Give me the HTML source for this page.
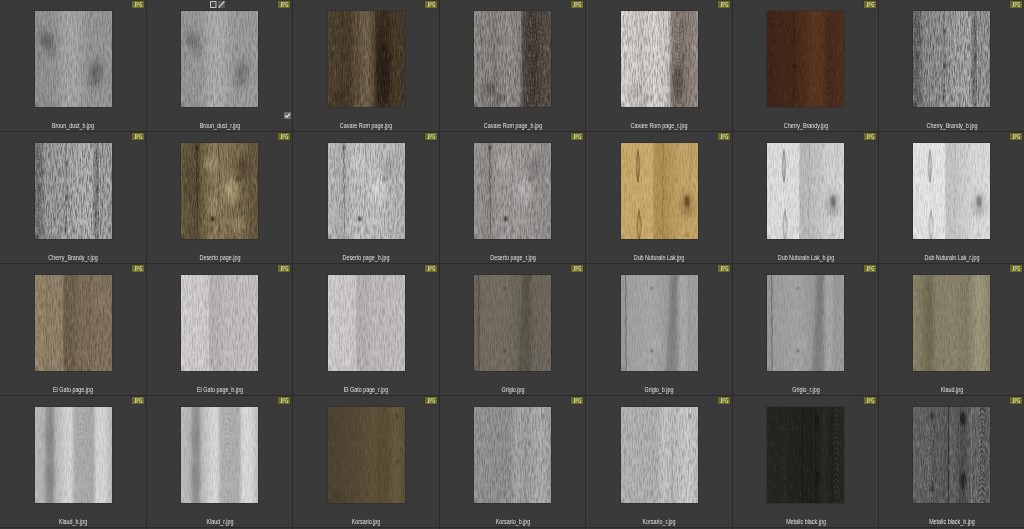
<!DOCTYPE html>
<html><head><meta charset="utf-8"><style>
*{margin:0;padding:0;box-sizing:border-box}
html,body{width:1024px;height:529px;overflow:hidden;background:#3a3a3a;font-family:"Liberation Sans",sans-serif}
.vl{position:absolute;top:0;width:1px;height:529px;background:#2a2a2a}
.hl{position:absolute;left:0;height:1px;width:1024px;background:#2a2a2a}
.th{position:absolute;width:77px;height:96px;box-shadow:0 0 0 1px rgba(20,20,20,.2)}
.th svg{display:block}
.lb{position:absolute;width:200px;height:10px;font-size:6.9px;line-height:10px;color:#e2e2e2;text-align:center;white-space:nowrap;transform:scaleX(.78);transform-origin:center}
.bd{position:absolute;width:12px;height:7px;box-shadow:0 0 0 1px rgba(40,40,60,.3)}
.bd span{position:absolute;left:0;top:0;width:12px;height:7px;font-size:6px;line-height:7px;font-weight:bold;color:#e2e2c8;text-align:center;transform:scaleX(.62);transform-origin:center;letter-spacing:-0.2px}
</style></head><body>
<div class="vl" style="left:146px"></div><div class="vl" style="left:292px"></div><div class="vl" style="left:439px"></div><div class="vl" style="left:585px"></div><div class="vl" style="left:732px"></div><div class="vl" style="left:878px"></div><div class="hl" style="top:131px"></div><div class="hl" style="top:263px"></div><div class="hl" style="top:395px"></div><div class="hl" style="top:527px"></div><svg width="0" height="0" style="position:absolute"><defs>
<filter id="grain" x="0" y="0" width="100%" height="100%"><feTurbulence type="fractalNoise" baseFrequency="0.8 0.12" numOctaves="3" seed="3"/><feColorMatrix type="matrix" values="0 0 0 0 0  0 0 0 0 0  0 0 0 0 0  0 0 0 -1.6 1.0"/></filter>
<filter id="grainL" x="0" y="0" width="100%" height="100%"><feTurbulence type="fractalNoise" baseFrequency="0.8 0.12" numOctaves="3" seed="7"/><feColorMatrix type="matrix" values="0 0 0 0 1  0 0 0 0 1  0 0 0 0 1  0 0 0 1.6 -0.9"/></filter>
<filter id="blur2" x="-60%" y="-60%" width="220%" height="220%"><feGaussianBlur stdDeviation="3"/></filter>
<filter id="soft" x="-10%" y="-10%" width="120%" height="120%"><feGaussianBlur stdDeviation="0.45"/></filter>
<filter id="blur1"><feGaussianBlur stdDeviation="1.2"/></filter>
</defs></svg><div class="th" style="left:35px;top:11px"><svg width="77" height="96" viewBox="0 0 77 96"><defs><linearGradient id="lg0" x1="0" x2="1" y1="0" y2="0"><stop offset="0" stop-color="#949494"/><stop offset="0.25" stop-color="#969696"/><stop offset="0.38" stop-color="#a8a8a8"/><stop offset="0.5" stop-color="#acacac"/><stop offset="0.6" stop-color="#a2a2a2"/><stop offset="0.72" stop-color="#989898"/><stop offset="1" stop-color="#9a9a9a"/></linearGradient></defs><rect width="77" height="96" fill="url(#lg0)"/><ellipse cx="12" cy="30" rx="6" ry="10" fill="#505050" opacity="0.6" filter="url(#blur2)"/><ellipse cx="17" cy="40" rx="4" ry="6" fill="#555" opacity="0.35" filter="url(#blur2)"/><ellipse cx="8" cy="24" rx="3" ry="4" fill="#555" opacity="0.3" filter="url(#blur2)"/><ellipse cx="61" cy="62" rx="6" ry="12" fill="#505050" opacity="0.6" filter="url(#blur2)"/><ellipse cx="57" cy="73" rx="4" ry="5" fill="#555" opacity="0.35" filter="url(#blur2)"/><ellipse cx="64" cy="55" rx="3" ry="4" fill="#555" opacity="0.3" filter="url(#blur2)"/><rect width="77" height="96" filter="url(#grain)" opacity="0.3"/><rect width="77" height="96" filter="url(#grainL)" opacity="0.25"/></svg></div><div class="lb" style="left:-27.00px;top:121px">Broun_dust_b.jpg</div><svg class="bd" style="left:132px;top:1px" width="12" height="7" viewBox="0 0 12 7"><rect width="12" height="7" fill="#6c6c1c"/><g fill="#d8d8c0" opacity=".8"><rect x="3" y="1" width="1" height="5"/><rect x="2" y="5" width="1" height="1" opacity=".6"/><rect x="4.5" y="1" width="1" height="5"/><rect x="5.5" y="1" width="1" height="1"/><rect x="5.5" y="3" width="1" height="1"/><rect x="6.3" y="1.7" width=".8" height="1.6"/><rect x="8" y="1" width="2" height="1"/><rect x="7.3" y="1.7" width="1" height="3.6"/><rect x="8" y="5" width="2" height="1"/><rect x="9.3" y="3" width=".9" height="2.3"/></g></svg><div class="th" style="left:181px;top:11px"><svg width="77" height="96" viewBox="0 0 77 96"><defs><linearGradient id="lg1" x1="0" x2="1" y1="0" y2="0"><stop offset="0" stop-color="#9a9a9a"/><stop offset="0.25" stop-color="#9c9c9c"/><stop offset="0.38" stop-color="#aeaeae"/><stop offset="0.5" stop-color="#b2b2b2"/><stop offset="0.6" stop-color="#a8a8a8"/><stop offset="0.72" stop-color="#9e9e9e"/><stop offset="1" stop-color="#a0a0a0"/></linearGradient></defs><rect width="77" height="96" fill="url(#lg1)"/><ellipse cx="12" cy="30" rx="6" ry="10" fill="#5a5a5a" opacity="0.5" filter="url(#blur2)"/><ellipse cx="17" cy="40" rx="4" ry="6" fill="#5e5e5e" opacity="0.3" filter="url(#blur2)"/><ellipse cx="8" cy="24" rx="3" ry="4" fill="#5e5e5e" opacity="0.25" filter="url(#blur2)"/><ellipse cx="61" cy="62" rx="6" ry="12" fill="#5a5a5a" opacity="0.5" filter="url(#blur2)"/><ellipse cx="57" cy="73" rx="4" ry="5" fill="#5e5e5e" opacity="0.3" filter="url(#blur2)"/><ellipse cx="64" cy="55" rx="3" ry="4" fill="#5e5e5e" opacity="0.25" filter="url(#blur2)"/><rect width="77" height="96" filter="url(#grain)" opacity="0.3"/><rect width="77" height="96" filter="url(#grainL)" opacity="0.25"/></svg></div><div class="lb" style="left:119.50px;top:121px">Broun_dust_r.jpg</div><svg class="bd" style="left:278px;top:1px" width="12" height="7" viewBox="0 0 12 7"><rect width="12" height="7" fill="#6c6c1c"/><g fill="#d8d8c0" opacity=".8"><rect x="3" y="1" width="1" height="5"/><rect x="2" y="5" width="1" height="1" opacity=".6"/><rect x="4.5" y="1" width="1" height="5"/><rect x="5.5" y="1" width="1" height="1"/><rect x="5.5" y="3" width="1" height="1"/><rect x="6.3" y="1.7" width=".8" height="1.6"/><rect x="8" y="1" width="2" height="1"/><rect x="7.3" y="1.7" width="1" height="3.6"/><rect x="8" y="5" width="2" height="1"/><rect x="9.3" y="3" width=".9" height="2.3"/></g></svg><div class="th" style="left:328px;top:11px"><svg width="77" height="96" viewBox="0 0 77 96"><defs><linearGradient id="lg2" x1="0" x2="1" y1="0" y2="0"><stop offset="0" stop-color="#54442f"/><stop offset="0.28" stop-color="#4e3f2c"/><stop offset="0.38" stop-color="#685844"/><stop offset="0.5" stop-color="#76664e"/><stop offset="0.6" stop-color="#5c4c38"/><stop offset="0.64" stop-color="#3e3022"/><stop offset="0.78" stop-color="#3a2d20"/><stop offset="0.86" stop-color="#4c3c2a"/><stop offset="1" stop-color="#4a3b2a"/></linearGradient></defs><rect width="77" height="96" fill="url(#lg2)"/><ellipse cx="55" cy="62" rx="4" ry="30" fill="#140e08" opacity="0.55" filter="url(#blur2)"/><ellipse cx="52" cy="30" rx="3" ry="14" fill="#1e160e" opacity="0.35" filter="url(#blur2)"/><path d="M29.5 0.0 L30.1 6.0 L29.7 12.0 L30.2 18.0 L30.3 24.0 L29.1 30.0 L29.0 36.0 L30.7 42.0 L29.5 48.0 L29.5 54.0 L31.0 60.0 L29.9 66.0 L30.7 72.0 L30.0 78.0 L30.3 84.0 L29.3 90.0 L30.3 96.0" fill="none" stroke="#2a2016" stroke-width="1.0" opacity="0.4"/><path d="M14.2 0.0 L14.5 6.0 L14.6 12.0 L14.9 18.0 L14.5 24.0 L14.8 30.0 L13.1 36.0 L13.9 42.0 L14.9 48.0 L14.3 54.0 L14.8 60.0 L13.2 66.0 L13.9 72.0 L13.5 78.0 L14.1 84.0 L14.1 90.0 L13.0 96.0" fill="none" stroke="#2a2016" stroke-width="1" opacity="0.3"/><ellipse cx="12" cy="85" rx="6" ry="5" fill="#2a2016" opacity="0.4" filter="url(#blur2)"/><path d="M39.3 0.0 L41.1 6.0 L39.1 12.0 L40.5 18.0 L39.0 24.0 L39.4 30.0 L41.2 36.0 L39.3 42.0 L40.3 48.0 L39.9 54.0 L39.9 60.0 L40.0 66.0 L39.3 72.0 L40.8 78.0 L39.0 84.0 L39.4 90.0 L38.8 96.0" fill="none" stroke="#a89a84" stroke-width="0.7" opacity="0.35"/><rect width="77" height="96" filter="url(#grain)" opacity="0.45"/><rect width="77" height="96" filter="url(#grainL)" opacity="0.25"/></svg></div><div class="lb" style="left:266.00px;top:121px">Cavare Rom page.jpg</div><svg class="bd" style="left:425px;top:1px" width="12" height="7" viewBox="0 0 12 7"><rect width="12" height="7" fill="#6c6c1c"/><g fill="#d8d8c0" opacity=".8"><rect x="3" y="1" width="1" height="5"/><rect x="2" y="5" width="1" height="1" opacity=".6"/><rect x="4.5" y="1" width="1" height="5"/><rect x="5.5" y="1" width="1" height="1"/><rect x="5.5" y="3" width="1" height="1"/><rect x="6.3" y="1.7" width=".8" height="1.6"/><rect x="8" y="1" width="2" height="1"/><rect x="7.3" y="1.7" width="1" height="3.6"/><rect x="8" y="5" width="2" height="1"/><rect x="9.3" y="3" width=".9" height="2.3"/></g></svg><div class="th" style="left:474px;top:11px"><svg width="77" height="96" viewBox="0 0 77 96"><defs><linearGradient id="lg3" x1="0" x2="1" y1="0" y2="0"><stop offset="0" stop-color="#96928e"/><stop offset="0.28" stop-color="#8c8884"/><stop offset="0.45" stop-color="#9a9692"/><stop offset="0.6" stop-color="#8e8884"/><stop offset="0.64" stop-color="#564e48"/><stop offset="0.8" stop-color="#4a423c"/><stop offset="1" stop-color="#5e5650"/></linearGradient></defs><rect width="77" height="96" fill="url(#lg3)"/><path d="M52.2 0.0 Q57.4 4.2 62.6 0.0 M53.4 3.5 Q58.5 7.3 63.5 3.5 M53.8 6.7 Q57.8 12.2 61.8 6.7 M52.8 11.3 Q58.4 16.1 64.1 11.3 M54.0 15.3 Q58.0 20.7 61.9 15.3 M53.9 19.8 Q58.5 24.5 63.0 19.8 M51.6 23.7 Q57.8 29.2 63.9 23.7 M52.0 28.3 Q58.2 33.9 64.4 28.3 M52.0 33.0 Q57.5 38.4 63.0 33.0 M52.3 37.5 Q58.3 41.6 64.4 37.5 M51.8 40.9 Q58.2 45.1 64.5 40.9 M51.4 44.4 Q57.8 49.4 64.3 44.4 M54.6 48.6 Q58.3 52.7 62.0 48.6 M53.0 52.0 Q58.4 56.5 63.9 52.0 M54.1 55.8 Q58.5 60.1 62.9 55.8 M53.1 59.4 Q58.1 65.0 63.1 59.4 M50.9 64.1 Q57.6 68.5 64.2 64.1 M52.4 67.8 Q58.5 73.5 64.6 67.8 M50.6 72.5 Q57.4 77.5 64.3 72.5 M53.9 76.7 Q58.5 82.3 63.0 76.7 M51.7 81.3 Q57.8 86.6 63.8 81.3 M53.6 85.7 Q58.1 91.4 62.6 85.7 M51.9 90.4 Q58.0 95.3 64.1 90.4 M52.6 94.5 Q57.8 99.9 63.0 94.5 " fill="none" stroke="#2a2420" stroke-width="0.9" opacity="0.5" filter="url(#soft)"/><path d="M63.4 4.0 Q67.6 9.7 71.8 4.0 M64.4 8.7 Q68.4 15.5 72.5 8.7 M63.7 14.4 Q68.2 19.4 72.7 14.4 M64.2 18.6 Q68.3 25.3 72.4 18.6 M64.1 24.2 Q68.4 30.1 72.8 24.2 M65.5 29.1 Q68.4 34.1 71.3 29.1 M64.2 33.3 Q68.0 38.2 71.8 33.3 M65.6 37.4 Q68.1 44.3 70.5 37.4 M65.6 43.2 Q68.2 49.9 70.7 43.2 M63.9 48.8 Q67.6 53.7 71.2 48.8 M63.3 52.9 Q67.6 59.3 71.9 52.9 M65.2 58.3 Q68.3 65.4 71.3 58.3 M65.7 64.2 Q68.5 70.4 71.4 64.2 M64.4 69.4 Q68.1 75.1 71.7 69.4 M65.9 74.1 Q68.5 79.7 71.1 74.1 M63.7 78.8 Q68.3 83.7 72.9 78.8 M63.3 82.9 Q67.8 89.5 72.4 82.9 M64.8 88.4 Q68.4 93.3 72.0 88.4 M64.9 92.5 Q67.5 98.7 70.0 92.5 " fill="none" stroke="#b0a8a0" stroke-width="0.6" opacity="0.3" filter="url(#soft)"/><ellipse cx="15" cy="78" rx="6" ry="6" fill="#3a3430" opacity="0.5" filter="url(#blur2)"/><ellipse cx="25" cy="88" rx="5" ry="5" fill="#3a3430" opacity="0.4" filter="url(#blur2)"/><path d="M20.6 0.0 L20.6 6.0 L20.0 12.0 L19.5 18.0 L19.0 24.0 L20.3 30.0 L19.9 36.0 L20.5 42.0 L19.7 48.0 L20.5 54.0 L19.5 60.0 L20.6 66.0 L20.5 72.0 L19.8 78.0 L20.1 84.0 L20.4 90.0 L19.4 96.0" fill="none" stroke="#4a4440" stroke-width="0.8" opacity="0.35"/><path d="M7.9 0.0 L7.7 6.0 L7.3 12.0 L8.7 18.0 L7.0 24.0 L8.0 30.0 L8.8 36.0 L7.2 42.0 L8.1 48.0 L8.2 54.0 L7.1 60.0 L7.8 66.0 L8.4 72.0 L7.9 78.0 L8.5 84.0 L7.3 90.0 L7.5 96.0" fill="none" stroke="#4a4440" stroke-width="0.8" opacity="0.3"/><rect width="77" height="96" filter="url(#grain)" opacity="0.5"/><rect width="77" height="96" filter="url(#grainL)" opacity="0.4"/></svg></div><div class="lb" style="left:412.50px;top:121px">Cavare Rom page_b.jpg</div><svg class="bd" style="left:571px;top:1px" width="12" height="7" viewBox="0 0 12 7"><rect width="12" height="7" fill="#6c6c1c"/><g fill="#d8d8c0" opacity=".8"><rect x="3" y="1" width="1" height="5"/><rect x="2" y="5" width="1" height="1" opacity=".6"/><rect x="4.5" y="1" width="1" height="5"/><rect x="5.5" y="1" width="1" height="1"/><rect x="5.5" y="3" width="1" height="1"/><rect x="6.3" y="1.7" width=".8" height="1.6"/><rect x="8" y="1" width="2" height="1"/><rect x="7.3" y="1.7" width="1" height="3.6"/><rect x="8" y="5" width="2" height="1"/><rect x="9.3" y="3" width=".9" height="2.3"/></g></svg><div class="th" style="left:621px;top:11px"><svg width="77" height="96" viewBox="0 0 77 96"><defs><linearGradient id="lg4" x1="0" x2="1" y1="0" y2="0"><stop offset="0" stop-color="#dedad6"/><stop offset="0.28" stop-color="#d4d0cc"/><stop offset="0.45" stop-color="#e0dcd8"/><stop offset="0.62" stop-color="#d0cac4"/><stop offset="0.66" stop-color="#948a82"/><stop offset="0.8" stop-color="#84786e"/><stop offset="1" stop-color="#a09690"/></linearGradient></defs><rect width="77" height="96" fill="url(#lg4)"/><path d="M53.5 10.0 Q58.0 15.3 62.6 10.0 M54.1 14.4 Q58.2 20.0 62.4 14.4 M52.9 19.0 Q58.5 24.6 64.1 19.0 M54.1 23.7 Q57.5 28.2 60.9 23.7 M53.0 27.4 Q57.5 31.7 62.1 27.4 M53.1 30.9 Q57.5 36.5 61.8 30.9 M54.9 35.6 Q58.5 39.6 62.1 35.6 M52.8 38.9 Q57.8 44.1 62.9 38.9 M53.0 43.2 Q58.1 47.6 63.2 43.2 M53.7 46.9 Q58.0 50.7 62.3 46.9 M54.2 50.1 Q58.5 54.3 62.7 50.1 M52.9 53.6 Q57.8 57.8 62.6 53.6 M52.6 57.1 Q58.3 62.9 64.0 57.1 M53.0 61.9 Q58.0 66.1 62.9 61.9 M52.5 65.4 Q57.8 70.5 63.2 65.4 M54.7 69.6 Q58.1 74.3 61.6 69.6 M52.7 73.6 Q57.7 78.8 62.7 73.6 M53.1 78.0 Q57.9 82.0 62.6 78.0 M52.8 81.3 Q57.6 86.6 62.5 81.3 M53.3 85.7 Q57.6 91.4 61.9 85.7 M53.5 90.4 Q57.9 95.8 62.3 90.4 M54.4 94.9 Q58.3 98.8 62.2 94.9 " fill="none" stroke="#5a4e46" stroke-width="0.9" opacity="0.45" filter="url(#soft)"/><ellipse cx="56" cy="72" rx="4" ry="20" fill="#3e3028" opacity="0.6" filter="url(#blur2)"/><ellipse cx="14" cy="80" rx="5" ry="6" fill="#8a8078" opacity="0.45" filter="url(#blur2)"/><ellipse cx="24" cy="88" rx="5" ry="4" fill="#8a8078" opacity="0.4" filter="url(#blur2)"/><path d="M20.6 0.0 L20.6 6.0 L20.0 12.0 L19.5 18.0 L19.0 24.0 L20.3 30.0 L19.9 36.0 L20.5 42.0 L19.7 48.0 L20.5 54.0 L19.5 60.0 L20.6 66.0 L20.5 72.0 L19.8 78.0 L20.1 84.0 L20.4 90.0 L19.4 96.0" fill="none" stroke="#9a928a" stroke-width="0.8" opacity="0.35"/><rect width="77" height="96" filter="url(#grain)" opacity="0.45"/><rect width="77" height="96" filter="url(#grainL)" opacity="0.35"/></svg></div><div class="lb" style="left:559.00px;top:121px">Cavare Rom page_r.jpg</div><svg class="bd" style="left:718px;top:1px" width="12" height="7" viewBox="0 0 12 7"><rect width="12" height="7" fill="#6c6c1c"/><g fill="#d8d8c0" opacity=".8"><rect x="3" y="1" width="1" height="5"/><rect x="2" y="5" width="1" height="1" opacity=".6"/><rect x="4.5" y="1" width="1" height="5"/><rect x="5.5" y="1" width="1" height="1"/><rect x="5.5" y="3" width="1" height="1"/><rect x="6.3" y="1.7" width=".8" height="1.6"/><rect x="8" y="1" width="2" height="1"/><rect x="7.3" y="1.7" width="1" height="3.6"/><rect x="8" y="5" width="2" height="1"/><rect x="9.3" y="3" width=".9" height="2.3"/></g></svg><div class="th" style="left:767px;top:11px"><svg width="77" height="96" viewBox="0 0 77 96"><defs><linearGradient id="lg5" x1="0" x2="1" y1="0" y2="0"><stop offset="0" stop-color="#42261a"/><stop offset="0.35" stop-color="#48291a"/><stop offset="0.5" stop-color="#52301e"/><stop offset="0.6" stop-color="#5e3822"/><stop offset="0.72" stop-color="#5a3520"/><stop offset="0.8" stop-color="#4a2c1c"/><stop offset="1" stop-color="#52301e"/></linearGradient></defs><rect width="77" height="96" fill="url(#lg5)"/><path d="M-2.2 0.0 Q3.5 6.5 9.2 0.0 M0.2 5.5 Q4.5 11.2 8.9 5.5 M-1.9 10.3 Q3.6 17.5 9.1 10.3 M-0.5 16.3 Q3.6 21.9 7.8 16.3 M-1.3 20.9 Q3.4 26.7 8.2 20.9 M0.5 25.7 Q3.5 30.9 6.5 25.7 M0.1 30.1 Q3.7 36.7 7.4 30.1 M0.3 35.6 Q4.4 42.6 8.6 35.6 M-0.9 41.4 Q4.5 47.6 10.0 41.4 M-0.4 46.6 Q4.5 52.7 9.3 46.6 M0.6 51.7 Q4.0 57.7 7.4 51.7 M0.0 56.7 Q3.5 62.0 7.0 56.7 M-0.5 61.1 Q4.4 67.5 9.3 61.1 M-0.7 66.4 Q3.4 71.2 7.6 66.4 M-0.8 70.4 Q4.0 76.3 8.8 70.4 M0.1 75.3 Q3.5 80.6 7.0 75.3 M0.8 79.7 Q4.1 85.2 7.5 79.7 M-0.6 84.3 Q3.9 90.4 8.4 84.3 M-0.7 89.4 Q4.3 94.5 9.4 89.4 M-1.2 93.7 Q4.4 100.5 10.1 93.7 " fill="none" stroke="#2e180c" stroke-width="0.9" opacity="0.35" filter="url(#soft)"/><path d="M26.8 0.0 L26.7 6.0 L27.2 12.0 L26.6 18.0 L27.0 24.0 L26.9 30.0 L26.6 36.0 L27.0 42.0 L26.5 48.0 L26.9 54.0 L26.6 60.0 L26.6 66.0 L26.9 72.0 L27.3 78.0 L26.6 84.0 L26.7 90.0 L27.1 96.0" fill="none" stroke="#2e180c" stroke-width="0.9" opacity="0.5"/><ellipse cx="27" cy="20" rx="1.2" ry="1.6" fill="#1e0e06" opacity="0.8" filter="url(#blur1)"/><ellipse cx="28" cy="55" rx="1.5" ry="2.5" fill="#1e0e06" opacity="0.7" filter="url(#blur1)"/><ellipse cx="27" cy="80" rx="1" ry="1.5" fill="#1e0e06" opacity="0.8" filter="url(#blur1)"/><path d="M57.6 5.0 Q60.9 11.9 64.2 5.0 M56.5 10.8 Q60.9 18.6 65.4 10.8 M57.7 17.3 Q61.3 23.5 64.9 17.3 M56.7 22.4 Q61.1 30.7 65.5 22.4 M57.9 29.3 Q60.7 35.3 63.6 29.3 M58.6 34.3 Q61.4 42.3 64.2 34.3 M57.8 41.0 Q61.6 46.8 65.4 41.0 M58.2 45.9 Q61.1 52.5 64.0 45.9 M58.4 51.4 Q61.5 57.8 64.5 51.4 M57.4 56.7 Q61.2 65.2 65.1 56.7 M57.1 63.8 Q60.5 70.5 64.0 63.8 M57.0 69.4 Q61.3 76.1 65.5 69.4 M57.2 75.0 Q61.2 81.1 65.1 75.0 M58.2 80.1 Q61.5 88.4 64.8 80.1 M56.8 87.1 Q61.1 93.9 65.4 87.1 M56.7 92.8 Q61.0 99.7 65.3 92.8 " fill="none" stroke="#2e180c" stroke-width="0.9" opacity="0.35" filter="url(#soft)"/><rect width="77" height="96" filter="url(#grain)" opacity="0.25"/><rect width="77" height="96" filter="url(#grainL)" opacity="0.1"/></svg></div><div class="lb" style="left:705.50px;top:121px">Cherry_Brandy.jpg</div><svg class="bd" style="left:864px;top:1px" width="12" height="7" viewBox="0 0 12 7"><rect width="12" height="7" fill="#6c6c1c"/><g fill="#d8d8c0" opacity=".8"><rect x="3" y="1" width="1" height="5"/><rect x="2" y="5" width="1" height="1" opacity=".6"/><rect x="4.5" y="1" width="1" height="5"/><rect x="5.5" y="1" width="1" height="1"/><rect x="5.5" y="3" width="1" height="1"/><rect x="6.3" y="1.7" width=".8" height="1.6"/><rect x="8" y="1" width="2" height="1"/><rect x="7.3" y="1.7" width="1" height="3.6"/><rect x="8" y="5" width="2" height="1"/><rect x="9.3" y="3" width=".9" height="2.3"/></g></svg><div class="th" style="left:913px;top:11px"><svg width="77" height="96" viewBox="0 0 77 96"><defs><linearGradient id="lg6" x1="0" x2="1" y1="0" y2="0"><stop offset="0" stop-color="#7e7e7e"/><stop offset="0.12" stop-color="#909090"/><stop offset="0.4" stop-color="#9a9a9a"/><stop offset="0.55" stop-color="#a8a8a8"/><stop offset="0.72" stop-color="#b0b0b0"/><stop offset="0.8" stop-color="#8e8e8e"/><stop offset="0.9" stop-color="#a0a0a0"/><stop offset="1" stop-color="#9a9a9a"/></linearGradient></defs><rect width="77" height="96" fill="url(#lg6)"/><rect x="0" y="0" width="9" height="96" fill="#3a3a3a" opacity="0.25" filter="url(#blur1)"/><path d="M-1.7 0.0 Q3.5 4.6 8.6 0.0 M0.6 3.8 Q4.5 7.9 8.4 3.8 M-1.4 7.2 Q3.6 12.2 8.6 7.2 M-0.1 11.4 Q3.6 15.3 7.3 11.4 M-0.8 14.7 Q3.4 18.7 7.7 14.7 M0.8 18.0 Q3.5 21.7 6.2 18.0 M0.5 21.0 Q3.7 25.7 7.0 21.0 M0.7 24.9 Q4.4 29.8 8.2 24.9 M-0.4 29.0 Q4.5 33.3 9.5 29.0 M0.1 32.6 Q4.5 36.9 8.8 32.6 M1.0 36.2 Q4.0 40.4 7.1 36.2 M0.4 39.7 Q3.5 43.4 6.7 39.7 M-0.1 42.8 Q4.4 47.2 8.8 42.8 M-0.3 46.5 Q3.4 49.8 7.2 46.5 M-0.3 49.3 Q4.0 53.4 8.4 49.3 M0.4 52.7 Q3.5 56.4 6.7 52.7 M1.1 55.8 Q4.1 59.7 7.1 55.8 M-0.2 59.0 Q3.9 63.3 8.0 59.0 M-0.2 62.6 Q4.3 66.2 8.9 62.6 M-0.7 65.6 Q4.4 70.3 9.5 65.6 M0.7 69.5 Q4.5 74.3 8.4 69.5 M0.9 73.5 Q4.2 78.3 7.5 73.5 M-0.1 77.5 Q4.5 81.7 9.0 77.5 M-0.9 81.0 Q3.5 85.5 7.9 81.0 M1.2 84.7 Q4.3 89.6 7.3 84.7 M-0.1 88.8 Q3.5 92.2 7.1 88.8 M-0.4 91.6 Q3.6 96.3 7.6 91.6 M-0.2 95.5 Q4.0 100.0 8.2 95.5 " fill="none" stroke="#3a3a3a" stroke-width="0.7" opacity="0.45" filter="url(#soft)"/><path d="M30.9 0.0 L30.7 6.0 L31.1 12.0 L30.7 18.0 L31.0 24.0 L30.9 30.0 L30.6 36.0 L31.0 42.0 L30.6 48.0 L30.9 54.0 L30.7 60.0 L30.7 66.0 L30.9 72.0 L31.3 78.0 L30.7 84.0 L30.8 90.0 L31.1 96.0" fill="none" stroke="#555" stroke-width="0.8" opacity="0.55"/><ellipse cx="31" cy="20" rx="1.2" ry="1.8" fill="#222" opacity="0.85" filter="url(#blur1)"/><ellipse cx="32" cy="55" rx="1.6" ry="3" fill="#333" opacity="0.7" filter="url(#blur1)"/><ellipse cx="31" cy="80" rx="1" ry="1.6" fill="#222" opacity="0.85" filter="url(#blur1)"/><rect x="59" y="0" width="6" height="96" fill="#3a3a3a" opacity="0.2" filter="url(#blur1)"/><path d="M60.6 5.0 Q62.6 9.9 64.5 5.0 M60.0 9.0 Q62.5 14.6 65.0 9.0 M60.5 13.7 Q62.4 17.7 64.3 13.7 M59.6 17.0 Q62.0 22.0 64.3 17.0 M59.3 21.1 Q61.5 26.8 63.7 21.1 M59.6 25.8 Q61.5 30.3 63.5 25.8 M59.7 29.6 Q61.9 33.6 64.1 29.6 M60.7 32.9 Q62.6 38.2 64.5 32.9 M58.9 37.3 Q61.5 41.7 64.1 37.3 M59.7 40.9 Q62.4 45.6 65.1 40.9 M60.2 44.8 Q62.1 49.2 63.9 44.8 M60.4 48.4 Q62.5 53.1 64.7 48.4 M59.2 52.3 Q61.8 56.9 64.4 52.3 M60.6 56.1 Q62.4 61.7 64.2 56.1 M59.7 60.7 Q61.8 66.0 64.0 60.7 M59.0 65.1 Q61.6 69.4 64.2 65.1 M59.2 68.7 Q61.9 74.2 64.6 68.7 M59.4 73.3 Q62.6 78.9 65.8 73.3 M58.4 78.0 Q61.6 83.3 64.8 78.0 M60.0 82.4 Q62.4 87.9 64.8 82.4 M58.8 87.0 Q61.5 91.9 64.2 87.0 M59.6 91.1 Q62.1 96.0 64.7 91.1 M60.0 95.2 Q62.0 99.2 64.1 95.2 " fill="none" stroke="#3a3a3a" stroke-width="0.7" opacity="0.5" filter="url(#soft)"/><rect x="64" y="0" width="1" height="96" fill="#e0e0e0" opacity="0.45"/><rect width="77" height="96" filter="url(#grain)" opacity="0.6"/><rect width="77" height="96" filter="url(#grainL)" opacity="0.5"/></svg></div><div class="lb" style="left:851.50px;top:121px">Cherry_Brandy_b.jpg</div><svg class="bd" style="left:1010px;top:1px" width="12" height="7" viewBox="0 0 12 7"><rect width="12" height="7" fill="#6c6c1c"/><g fill="#d8d8c0" opacity=".8"><rect x="3" y="1" width="1" height="5"/><rect x="2" y="5" width="1" height="1" opacity=".6"/><rect x="4.5" y="1" width="1" height="5"/><rect x="5.5" y="1" width="1" height="1"/><rect x="5.5" y="3" width="1" height="1"/><rect x="6.3" y="1.7" width=".8" height="1.6"/><rect x="8" y="1" width="2" height="1"/><rect x="7.3" y="1.7" width="1" height="3.6"/><rect x="8" y="5" width="2" height="1"/><rect x="9.3" y="3" width=".9" height="2.3"/></g></svg><div class="th" style="left:35px;top:143px"><svg width="77" height="96" viewBox="0 0 77 96"><defs><linearGradient id="lg7" x1="0" x2="1" y1="0" y2="0"><stop offset="0" stop-color="#8c8c8c"/><stop offset="0.12" stop-color="#a0a0a0"/><stop offset="0.4" stop-color="#a8a8a8"/><stop offset="0.55" stop-color="#b4b4b4"/><stop offset="0.72" stop-color="#bababa"/><stop offset="0.8" stop-color="#989898"/><stop offset="0.9" stop-color="#acacac"/><stop offset="1" stop-color="#a8a8a8"/></linearGradient></defs><rect width="77" height="96" fill="url(#lg7)"/><rect x="0" y="0" width="9" height="96" fill="#4a4a4a" opacity="0.25" filter="url(#blur1)"/><path d="M-1.7 0.0 Q3.5 4.6 8.6 0.0 M0.6 3.8 Q4.5 7.9 8.4 3.8 M-1.4 7.2 Q3.6 12.2 8.6 7.2 M-0.1 11.4 Q3.6 15.3 7.3 11.4 M-0.8 14.7 Q3.4 18.7 7.7 14.7 M0.8 18.0 Q3.5 21.7 6.2 18.0 M0.5 21.0 Q3.7 25.7 7.0 21.0 M0.7 24.9 Q4.4 29.8 8.2 24.9 M-0.4 29.0 Q4.5 33.3 9.5 29.0 M0.1 32.6 Q4.5 36.9 8.8 32.6 M1.0 36.2 Q4.0 40.4 7.1 36.2 M0.4 39.7 Q3.5 43.4 6.7 39.7 M-0.1 42.8 Q4.4 47.2 8.8 42.8 M-0.3 46.5 Q3.4 49.8 7.2 46.5 M-0.3 49.3 Q4.0 53.4 8.4 49.3 M0.4 52.7 Q3.5 56.4 6.7 52.7 M1.1 55.8 Q4.1 59.7 7.1 55.8 M-0.2 59.0 Q3.9 63.3 8.0 59.0 M-0.2 62.6 Q4.3 66.2 8.9 62.6 M-0.7 65.6 Q4.4 70.3 9.5 65.6 M0.7 69.5 Q4.5 74.3 8.4 69.5 M0.9 73.5 Q4.2 78.3 7.5 73.5 M-0.1 77.5 Q4.5 81.7 9.0 77.5 M-0.9 81.0 Q3.5 85.5 7.9 81.0 M1.2 84.7 Q4.3 89.6 7.3 84.7 M-0.1 88.8 Q3.5 92.2 7.1 88.8 M-0.4 91.6 Q3.6 96.3 7.6 91.6 M-0.2 95.5 Q4.0 100.0 8.2 95.5 " fill="none" stroke="#4a4a4a" stroke-width="0.7" opacity="0.45" filter="url(#soft)"/><path d="M30.9 0.0 L30.7 6.0 L31.1 12.0 L30.7 18.0 L31.0 24.0 L30.9 30.0 L30.6 36.0 L31.0 42.0 L30.6 48.0 L30.9 54.0 L30.7 60.0 L30.7 66.0 L30.9 72.0 L31.3 78.0 L30.7 84.0 L30.8 90.0 L31.1 96.0" fill="none" stroke="#666" stroke-width="0.8" opacity="0.55"/><ellipse cx="31" cy="20" rx="1.2" ry="1.8" fill="#333" opacity="0.85" filter="url(#blur1)"/><ellipse cx="32" cy="55" rx="1.6" ry="3" fill="#444" opacity="0.7" filter="url(#blur1)"/><ellipse cx="31" cy="80" rx="1" ry="1.6" fill="#333" opacity="0.85" filter="url(#blur1)"/><rect x="59" y="0" width="6" height="96" fill="#4a4a4a" opacity="0.2" filter="url(#blur1)"/><path d="M60.6 5.0 Q62.6 9.9 64.5 5.0 M60.0 9.0 Q62.5 14.6 65.0 9.0 M60.5 13.7 Q62.4 17.7 64.3 13.7 M59.6 17.0 Q62.0 22.0 64.3 17.0 M59.3 21.1 Q61.5 26.8 63.7 21.1 M59.6 25.8 Q61.5 30.3 63.5 25.8 M59.7 29.6 Q61.9 33.6 64.1 29.6 M60.7 32.9 Q62.6 38.2 64.5 32.9 M58.9 37.3 Q61.5 41.7 64.1 37.3 M59.7 40.9 Q62.4 45.6 65.1 40.9 M60.2 44.8 Q62.1 49.2 63.9 44.8 M60.4 48.4 Q62.5 53.1 64.7 48.4 M59.2 52.3 Q61.8 56.9 64.4 52.3 M60.6 56.1 Q62.4 61.7 64.2 56.1 M59.7 60.7 Q61.8 66.0 64.0 60.7 M59.0 65.1 Q61.6 69.4 64.2 65.1 M59.2 68.7 Q61.9 74.2 64.6 68.7 M59.4 73.3 Q62.6 78.9 65.8 73.3 M58.4 78.0 Q61.6 83.3 64.8 78.0 M60.0 82.4 Q62.4 87.9 64.8 82.4 M58.8 87.0 Q61.5 91.9 64.2 87.0 M59.6 91.1 Q62.1 96.0 64.7 91.1 M60.0 95.2 Q62.0 99.2 64.1 95.2 " fill="none" stroke="#4a4a4a" stroke-width="0.7" opacity="0.5" filter="url(#soft)"/><rect x="64" y="0" width="1" height="96" fill="#eeeeee" opacity="0.45"/><rect width="77" height="96" filter="url(#grain)" opacity="0.6"/><rect width="77" height="96" filter="url(#grainL)" opacity="0.5"/></svg></div><div class="lb" style="left:-27.00px;top:253px">Cherry_Brandy_r.jpg</div><svg class="bd" style="left:132px;top:133px" width="12" height="7" viewBox="0 0 12 7"><rect width="12" height="7" fill="#6c6c1c"/><g fill="#d8d8c0" opacity=".8"><rect x="3" y="1" width="1" height="5"/><rect x="2" y="5" width="1" height="1" opacity=".6"/><rect x="4.5" y="1" width="1" height="5"/><rect x="5.5" y="1" width="1" height="1"/><rect x="5.5" y="3" width="1" height="1"/><rect x="6.3" y="1.7" width=".8" height="1.6"/><rect x="8" y="1" width="2" height="1"/><rect x="7.3" y="1.7" width="1" height="3.6"/><rect x="8" y="5" width="2" height="1"/><rect x="9.3" y="3" width=".9" height="2.3"/></g></svg><div class="th" style="left:181px;top:143px"><svg width="77" height="96" viewBox="0 0 77 96"><defs><linearGradient id="lg8" x1="0" x2="1" y1="0" y2="0"><stop offset="0" stop-color="#6e6044"/><stop offset="0.2" stop-color="#5e5238"/><stop offset="0.3" stop-color="#7a6a4a"/><stop offset="0.45" stop-color="#948260"/><stop offset="0.6" stop-color="#8a7856"/><stop offset="0.75" stop-color="#7e6e4e"/><stop offset="1" stop-color="#6a5c42"/></linearGradient></defs><rect width="77" height="96" fill="url(#lg8)"/><path d="M16.0 0.0 Q17.5 2.5 16.0 5.0 Q14.5 7.5 16.0 10.0 Q17.5 12.5 16.0 15.0 Q14.5 17.5 16.0 20.0 Q17.5 22.5 16.0 25.0 Q14.5 27.5 16.0 30.0 Q17.5 32.5 16.0 35.0 Q14.5 37.5 16.0 40.0 Q17.5 42.5 16.0 45.0 Q14.5 47.5 16.0 50.0 Q17.5 52.5 16.0 55.0 Q14.5 57.5 16.0 60.0 Q17.5 62.5 16.0 65.0 " fill="none" stroke="#2a2214" stroke-width="1.0" opacity="0.7" filter="url(#soft)"/><path d="M18.0 0.0 Q19.2 2.0 18.0 4.0 Q16.8 6.0 18.0 8.0 Q19.2 10.0 18.0 12.0 Q16.8 14.0 18.0 16.0 Q19.2 18.0 18.0 20.0 Q16.8 22.0 18.0 24.0 Q19.2 26.0 18.0 28.0 Q16.8 30.0 18.0 32.0 Q19.2 34.0 18.0 36.0 Q16.8 38.0 18.0 40.0 Q19.2 42.0 18.0 44.0 Q16.8 46.0 18.0 48.0 Q19.2 50.0 18.0 52.0 Q16.8 54.0 18.0 56.0 Q19.2 58.0 18.0 60.0 Q16.8 62.0 18.0 64.0 " fill="none" stroke="#3a3020" stroke-width="0.7" opacity="0.5" filter="url(#soft)"/><path d="M16.6 55.0 L16.4 61.0 L16.8 67.0 L16.4 73.0 L16.3 79.0 L16.8 85.0 L17.7 91.0" fill="none" stroke="#3a3020" stroke-width="1" opacity="0.45"/><ellipse cx="16" cy="5" rx="1.5" ry="2" fill="#1a140a" opacity="0.8" filter="url(#blur1)"/><ellipse cx="32" cy="76" rx="2" ry="2.4" fill="#1a140a" opacity="0.85" filter="url(#blur1)"/><ellipse cx="29" cy="45" rx="1.5" ry="1" fill="#2a2214" opacity="0.6" filter="url(#blur1)"/><ellipse cx="58" cy="36" rx="2" ry="2" fill="#2a2214" opacity="0.6" filter="url(#blur1)"/><ellipse cx="30" cy="22" rx="6" ry="8" fill="#b4a27a" opacity="0.8" filter="url(#blur2)"/><ellipse cx="33" cy="62" rx="6" ry="10" fill="#ac9a72" opacity="0.7" filter="url(#blur2)"/><path d="M37.9 0.0 L37.7 6.0 L37.3 12.0 L38.7 18.0 L37.0 24.0 L38.0 30.0 L38.8 36.0 L37.2 42.0 L38.1 48.0 L38.2 54.0 L37.1 60.0 L37.8 66.0 L38.4 72.0 L37.9 78.0 L38.5 84.0 L37.3 90.0 L37.5 96.0" fill="none" stroke="#3a3020" stroke-width="0.9" opacity="0.45"/><ellipse cx="50" cy="48" rx="6" ry="14" fill="#c0ae86" opacity="0.85" filter="url(#blur2)"/><ellipse cx="58" cy="82" rx="5" ry="9" fill="#b4a27a" opacity="0.7" filter="url(#blur2)"/><ellipse cx="62" cy="25" rx="5" ry="11" fill="#46392a" opacity="0.7" filter="url(#blur2)"/><ellipse cx="8" cy="40" rx="4" ry="20" fill="#4e4430" opacity="0.5" filter="url(#blur2)"/><ellipse cx="62" cy="88" rx="1.5" ry="2" fill="#1a140a" opacity="0.6" filter="url(#blur1)"/><path d="M69.9 0.0 L70.3 6.0 L70.3 12.0 L69.3 18.0 L69.0 24.0 L69.7 30.0 L69.5 36.0 L70.6 42.0 L70.4 48.0 L70.2 54.0 L70.1 60.0 L70.3 66.0 L69.3 72.0 L69.9 78.0 L69.3 84.0 L70.8 90.0 L69.1 96.0" fill="none" stroke="#3a3020" stroke-width="0.8" opacity="0.35"/><rect width="77" height="96" filter="url(#grain)" opacity="0.45"/><rect width="77" height="96" filter="url(#grainL)" opacity="0.25"/></svg></div><div class="lb" style="left:119.50px;top:253px">Deserto page.jpg</div><svg class="bd" style="left:278px;top:133px" width="12" height="7" viewBox="0 0 12 7"><rect width="12" height="7" fill="#6c6c1c"/><g fill="#d8d8c0" opacity=".8"><rect x="3" y="1" width="1" height="5"/><rect x="2" y="5" width="1" height="1" opacity=".6"/><rect x="4.5" y="1" width="1" height="5"/><rect x="5.5" y="1" width="1" height="1"/><rect x="5.5" y="3" width="1" height="1"/><rect x="6.3" y="1.7" width=".8" height="1.6"/><rect x="8" y="1" width="2" height="1"/><rect x="7.3" y="1.7" width="1" height="3.6"/><rect x="8" y="5" width="2" height="1"/><rect x="9.3" y="3" width=".9" height="2.3"/></g></svg><div class="th" style="left:328px;top:143px"><svg width="77" height="96" viewBox="0 0 77 96"><defs><linearGradient id="lg9" x1="0" x2="1" y1="0" y2="0"><stop offset="0" stop-color="#c4c2c0"/><stop offset="0.2" stop-color="#b6b4b2"/><stop offset="0.3" stop-color="#c6c4c2"/><stop offset="0.5" stop-color="#cccac8"/><stop offset="0.7" stop-color="#c6c4c2"/><stop offset="1" stop-color="#bebcba"/></linearGradient></defs><rect width="77" height="96" fill="url(#lg9)"/><path d="M16.0 0.0 Q17.5 2.5 16.0 5.0 Q14.5 7.5 16.0 10.0 Q17.5 12.5 16.0 15.0 Q14.5 17.5 16.0 20.0 Q17.5 22.5 16.0 25.0 Q14.5 27.5 16.0 30.0 Q17.5 32.5 16.0 35.0 Q14.5 37.5 16.0 40.0 Q17.5 42.5 16.0 45.0 Q14.5 47.5 16.0 50.0 Q17.5 52.5 16.0 55.0 Q14.5 57.5 16.0 60.0 Q17.5 62.5 16.0 65.0 " fill="none" stroke="#555" stroke-width="1.0" opacity="0.6" filter="url(#soft)"/><path d="M16.6 55.0 L16.4 61.0 L16.8 67.0 L16.4 73.0 L16.3 79.0 L16.8 85.0 L17.7 91.0" fill="none" stroke="#777" stroke-width="1" opacity="0.45"/><ellipse cx="16" cy="5" rx="1.5" ry="2" fill="#333" opacity="0.8" filter="url(#blur1)"/><ellipse cx="32" cy="76" rx="2" ry="2.4" fill="#333" opacity="0.85" filter="url(#blur1)"/><ellipse cx="29" cy="45" rx="1.5" ry="1" fill="#555" opacity="0.6" filter="url(#blur1)"/><ellipse cx="58" cy="36" rx="2" ry="2" fill="#666" opacity="0.5" filter="url(#blur1)"/><ellipse cx="50" cy="48" rx="6" ry="14" fill="#e8e8e8" opacity="0.7" filter="url(#blur2)"/><ellipse cx="30" cy="22" rx="6" ry="8" fill="#e2e2e2" opacity="0.55" filter="url(#blur2)"/><ellipse cx="62" cy="25" rx="5" ry="11" fill="#909090" opacity="0.35" filter="url(#blur2)"/><path d="M37.9 0.0 L37.7 6.0 L37.3 12.0 L38.7 18.0 L37.0 24.0 L38.0 30.0 L38.8 36.0 L37.2 42.0 L38.1 48.0 L38.2 54.0 L37.1 60.0 L37.8 66.0 L38.4 72.0 L37.9 78.0 L38.5 84.0 L37.3 90.0 L37.5 96.0" fill="none" stroke="#888" stroke-width="0.9" opacity="0.4"/><ellipse cx="60" cy="25" rx="4" ry="10" fill="#888" opacity="0.3" filter="url(#blur2)"/><ellipse cx="62" cy="88" rx="1.5" ry="2" fill="#444" opacity="0.6" filter="url(#blur1)"/><path d="M69.9 0.0 L70.3 6.0 L70.3 12.0 L69.3 18.0 L69.0 24.0 L69.7 30.0 L69.5 36.0 L70.6 42.0 L70.4 48.0 L70.2 54.0 L70.1 60.0 L70.3 66.0 L69.3 72.0 L69.9 78.0 L69.3 84.0 L70.8 90.0 L69.1 96.0" fill="none" stroke="#888" stroke-width="0.8" opacity="0.35"/><rect width="77" height="96" filter="url(#grain)" opacity="0.4"/><rect width="77" height="96" filter="url(#grainL)" opacity="0.3"/></svg></div><div class="lb" style="left:266.00px;top:253px">Deserto page_b.jpg</div><svg class="bd" style="left:425px;top:133px" width="12" height="7" viewBox="0 0 12 7"><rect width="12" height="7" fill="#6c6c1c"/><g fill="#d8d8c0" opacity=".8"><rect x="3" y="1" width="1" height="5"/><rect x="2" y="5" width="1" height="1" opacity=".6"/><rect x="4.5" y="1" width="1" height="5"/><rect x="5.5" y="1" width="1" height="1"/><rect x="5.5" y="3" width="1" height="1"/><rect x="6.3" y="1.7" width=".8" height="1.6"/><rect x="8" y="1" width="2" height="1"/><rect x="7.3" y="1.7" width="1" height="3.6"/><rect x="8" y="5" width="2" height="1"/><rect x="9.3" y="3" width=".9" height="2.3"/></g></svg><div class="th" style="left:474px;top:143px"><svg width="77" height="96" viewBox="0 0 77 96"><defs><linearGradient id="lg10" x1="0" x2="1" y1="0" y2="0"><stop offset="0" stop-color="#a09c9a"/><stop offset="0.2" stop-color="#928e8c"/><stop offset="0.3" stop-color="#a29e9c"/><stop offset="0.5" stop-color="#a8a4a2"/><stop offset="0.7" stop-color="#a09c9a"/><stop offset="1" stop-color="#9a9694"/></linearGradient></defs><rect width="77" height="96" fill="url(#lg10)"/><path d="M16.0 0.0 Q17.5 2.5 16.0 5.0 Q14.5 7.5 16.0 10.0 Q17.5 12.5 16.0 15.0 Q14.5 17.5 16.0 20.0 Q17.5 22.5 16.0 25.0 Q14.5 27.5 16.0 30.0 Q17.5 32.5 16.0 35.0 Q14.5 37.5 16.0 40.0 Q17.5 42.5 16.0 45.0 Q14.5 47.5 16.0 50.0 Q17.5 52.5 16.0 55.0 Q14.5 57.5 16.0 60.0 Q17.5 62.5 16.0 65.0 " fill="none" stroke="#444" stroke-width="1.0" opacity="0.6" filter="url(#soft)"/><path d="M16.6 55.0 L16.4 61.0 L16.8 67.0 L16.4 73.0 L16.3 79.0 L16.8 85.0 L17.7 91.0" fill="none" stroke="#555" stroke-width="1" opacity="0.45"/><ellipse cx="16" cy="5" rx="1.5" ry="2" fill="#222" opacity="0.8" filter="url(#blur1)"/><ellipse cx="32" cy="76" rx="2" ry="2.4" fill="#222" opacity="0.85" filter="url(#blur1)"/><ellipse cx="29" cy="45" rx="1.5" ry="1" fill="#444" opacity="0.6" filter="url(#blur1)"/><ellipse cx="58" cy="36" rx="2" ry="2" fill="#555" opacity="0.5" filter="url(#blur1)"/><ellipse cx="50" cy="48" rx="6" ry="14" fill="#c8c6c4" opacity="0.7" filter="url(#blur2)"/><ellipse cx="30" cy="22" rx="6" ry="8" fill="#c4c2c0" opacity="0.55" filter="url(#blur2)"/><ellipse cx="62" cy="25" rx="5" ry="11" fill="#6a6866" opacity="0.35" filter="url(#blur2)"/><path d="M37.9 0.0 L37.7 6.0 L37.3 12.0 L38.7 18.0 L37.0 24.0 L38.0 30.0 L38.8 36.0 L37.2 42.0 L38.1 48.0 L38.2 54.0 L37.1 60.0 L37.8 66.0 L38.4 72.0 L37.9 78.0 L38.5 84.0 L37.3 90.0 L37.5 96.0" fill="none" stroke="#666" stroke-width="0.9" opacity="0.4"/><ellipse cx="60" cy="25" rx="4" ry="10" fill="#666" opacity="0.3" filter="url(#blur2)"/><ellipse cx="62" cy="88" rx="1.5" ry="2" fill="#333" opacity="0.6" filter="url(#blur1)"/><path d="M69.9 0.0 L70.3 6.0 L70.3 12.0 L69.3 18.0 L69.0 24.0 L69.7 30.0 L69.5 36.0 L70.6 42.0 L70.4 48.0 L70.2 54.0 L70.1 60.0 L70.3 66.0 L69.3 72.0 L69.9 78.0 L69.3 84.0 L70.8 90.0 L69.1 96.0" fill="none" stroke="#666" stroke-width="0.8" opacity="0.35"/><rect width="77" height="96" filter="url(#grain)" opacity="0.4"/><rect width="77" height="96" filter="url(#grainL)" opacity="0.3"/></svg></div><div class="lb" style="left:412.50px;top:253px">Deserto page_r.jpg</div><svg class="bd" style="left:571px;top:133px" width="12" height="7" viewBox="0 0 12 7"><rect width="12" height="7" fill="#6c6c1c"/><g fill="#d8d8c0" opacity=".8"><rect x="3" y="1" width="1" height="5"/><rect x="2" y="5" width="1" height="1" opacity=".6"/><rect x="4.5" y="1" width="1" height="5"/><rect x="5.5" y="1" width="1" height="1"/><rect x="5.5" y="3" width="1" height="1"/><rect x="6.3" y="1.7" width=".8" height="1.6"/><rect x="8" y="1" width="2" height="1"/><rect x="7.3" y="1.7" width="1" height="3.6"/><rect x="8" y="5" width="2" height="1"/><rect x="9.3" y="3" width=".9" height="2.3"/></g></svg><div class="th" style="left:621px;top:143px"><svg width="77" height="96" viewBox="0 0 77 96"><defs><linearGradient id="lg11" x1="0" x2="1" y1="0" y2="0"><stop offset="0" stop-color="#ccab6c"/><stop offset="0.41" stop-color="#d0ae70"/><stop offset="0.43" stop-color="#b69558"/><stop offset="0.55" stop-color="#b29254"/><stop offset="0.7" stop-color="#bea062"/><stop offset="0.8" stop-color="#c6a66a"/><stop offset="1" stop-color="#caa86c"/></linearGradient></defs><rect width="77" height="96" fill="url(#lg11)"/><path d="M17.0 6.0 Q18.9 23.0 17.0 40.0 Q15.1 23.0 17.0 6.0 M17.0 8.7 Q20.8 23.5 17.0 38.3 Q13.2 23.5 17.0 8.7 " fill="none" stroke="#6a4a20" stroke-width="0.6" opacity="0.75"/><path d="M18.0 66.0 Q20.4 83.0 18.0 100.0 Q15.6 83.0 18.0 66.0 M18.0 68.7 Q22.8 83.5 18.0 98.3 Q13.2 83.5 18.0 68.7 " fill="none" stroke="#6a4a20" stroke-width="0.6" opacity="0.65"/><ellipse cx="17" cy="72" rx="4" ry="4" fill="#a88850" opacity="0.4" filter="url(#blur2)"/><path d="M41.9 0.0 L42.1 6.0 L42.6 12.0 L42.0 18.0 L42.0 24.0 L42.1 30.0 L41.6 36.0 L42.0 42.0 L42.2 48.0 L42.4 54.0 L41.4 60.0 L41.7 66.0 L41.4 72.0 L42.4 78.0 L42.3 84.0 L41.4 90.0 L42.7 96.0" fill="none" stroke="#8a6a40" stroke-width="0.8" opacity="0.55"/><ellipse cx="42" cy="35" rx="0.8" ry="1.2" fill="#6a4a20" opacity="0.7" filter="url(#blur1)"/><ellipse cx="43" cy="55" rx="0.8" ry="1.2" fill="#6a4a20" opacity="0.7" filter="url(#blur1)"/><ellipse cx="66" cy="62" rx="5" ry="12" fill="#8a6a3a" opacity="0.8" filter="url(#blur2)"/><ellipse cx="66" cy="58" rx="2.5" ry="6" fill="#5a3a18" opacity="0.7" filter="url(#blur1)"/><ellipse cx="66" cy="92" rx="1.2" ry="2" fill="#6a4a20" opacity="0.7" filter="url(#blur1)"/><path d="M69.6 0.0 L70.3 6.0 L70.3 12.0 L70.6 18.0 L69.5 24.0 L69.6 30.0 L69.4 36.0" fill="none" stroke="#8a6a40" stroke-width="0.8" opacity="0.4"/><rect width="77" height="96" filter="url(#grain)" opacity="0.2"/><rect width="77" height="96" filter="url(#grainL)" opacity="0.15"/></svg></div><div class="lb" style="left:559.00px;top:253px">Dub Nuturaln Lak.jpg</div><svg class="bd" style="left:718px;top:133px" width="12" height="7" viewBox="0 0 12 7"><rect width="12" height="7" fill="#6c6c1c"/><g fill="#d8d8c0" opacity=".8"><rect x="3" y="1" width="1" height="5"/><rect x="2" y="5" width="1" height="1" opacity=".6"/><rect x="4.5" y="1" width="1" height="5"/><rect x="5.5" y="1" width="1" height="1"/><rect x="5.5" y="3" width="1" height="1"/><rect x="6.3" y="1.7" width=".8" height="1.6"/><rect x="8" y="1" width="2" height="1"/><rect x="7.3" y="1.7" width="1" height="3.6"/><rect x="8" y="5" width="2" height="1"/><rect x="9.3" y="3" width=".9" height="2.3"/></g></svg><div class="th" style="left:767px;top:143px"><svg width="77" height="96" viewBox="0 0 77 96"><defs><linearGradient id="lg12" x1="0" x2="1" y1="0" y2="0"><stop offset="0" stop-color="#e0e0e0"/><stop offset="0.41" stop-color="#e2e2e2"/><stop offset="0.43" stop-color="#bcbcbc"/><stop offset="0.55" stop-color="#c0c0c0"/><stop offset="0.7" stop-color="#cacaca"/><stop offset="0.8" stop-color="#d4d4d4"/><stop offset="1" stop-color="#d8d8d8"/></linearGradient></defs><rect width="77" height="96" fill="url(#lg12)"/><path d="M17.0 6.0 Q18.9 23.0 17.0 40.0 Q15.1 23.0 17.0 6.0 M17.0 8.7 Q20.8 23.5 17.0 38.3 Q13.2 23.5 17.0 8.7 " fill="none" stroke="#666" stroke-width="0.6" opacity="0.7"/><path d="M18.0 66.0 Q20.4 83.0 18.0 100.0 Q15.6 83.0 18.0 66.0 M18.0 68.7 Q22.8 83.5 18.0 98.3 Q13.2 83.5 18.0 68.7 " fill="none" stroke="#777" stroke-width="0.6" opacity="0.6"/><path d="M41.9 0.0 L42.1 6.0 L42.6 12.0 L42.0 18.0 L42.0 24.0 L42.1 30.0 L41.6 36.0 L42.0 42.0 L42.2 48.0 L42.4 54.0 L41.4 60.0 L41.7 66.0 L41.4 72.0 L42.4 78.0 L42.3 84.0 L41.4 90.0 L42.7 96.0" fill="none" stroke="#999" stroke-width="0.8" opacity="0.5"/><ellipse cx="42" cy="35" rx="0.8" ry="1.2" fill="#777" opacity="0.6" filter="url(#blur1)"/><ellipse cx="43" cy="55" rx="0.8" ry="1.2" fill="#777" opacity="0.6" filter="url(#blur1)"/><ellipse cx="66" cy="62" rx="5" ry="12" fill="#8a8a8a" opacity="0.75" filter="url(#blur2)"/><ellipse cx="66" cy="58" rx="2.5" ry="6" fill="#555" opacity="0.6" filter="url(#blur1)"/><ellipse cx="66" cy="92" rx="1.2" ry="2" fill="#777" opacity="0.6" filter="url(#blur1)"/><path d="M69.6 0.0 L70.3 6.0 L70.3 12.0 L70.6 18.0 L69.5 24.0 L69.6 30.0 L69.4 36.0" fill="none" stroke="#999" stroke-width="0.8" opacity="0.35"/><rect width="77" height="96" filter="url(#grain)" opacity="0.2"/><rect width="77" height="96" filter="url(#grainL)" opacity="0.2"/></svg></div><div class="lb" style="left:705.50px;top:253px">Dub Nuturaln Lak_b.jpg</div><svg class="bd" style="left:864px;top:133px" width="12" height="7" viewBox="0 0 12 7"><rect width="12" height="7" fill="#6c6c1c"/><g fill="#d8d8c0" opacity=".8"><rect x="3" y="1" width="1" height="5"/><rect x="2" y="5" width="1" height="1" opacity=".6"/><rect x="4.5" y="1" width="1" height="5"/><rect x="5.5" y="1" width="1" height="1"/><rect x="5.5" y="3" width="1" height="1"/><rect x="6.3" y="1.7" width=".8" height="1.6"/><rect x="8" y="1" width="2" height="1"/><rect x="7.3" y="1.7" width="1" height="3.6"/><rect x="8" y="5" width="2" height="1"/><rect x="9.3" y="3" width=".9" height="2.3"/></g></svg><div class="th" style="left:913px;top:143px"><svg width="77" height="96" viewBox="0 0 77 96"><defs><linearGradient id="lg13" x1="0" x2="1" y1="0" y2="0"><stop offset="0" stop-color="#e6e6e6"/><stop offset="0.41" stop-color="#e8e8e8"/><stop offset="0.43" stop-color="#c6c6c6"/><stop offset="0.55" stop-color="#cacaca"/><stop offset="0.7" stop-color="#d4d4d4"/><stop offset="0.8" stop-color="#dcdcdc"/><stop offset="1" stop-color="#e0e0e0"/></linearGradient></defs><rect width="77" height="96" fill="url(#lg13)"/><path d="M17.0 6.0 Q18.9 23.0 17.0 40.0 Q15.1 23.0 17.0 6.0 M17.0 8.7 Q20.8 23.5 17.0 38.3 Q13.2 23.5 17.0 8.7 " fill="none" stroke="#777" stroke-width="0.6" opacity="0.7"/><path d="M18.0 66.0 Q20.4 83.0 18.0 100.0 Q15.6 83.0 18.0 66.0 M18.0 68.7 Q22.8 83.5 18.0 98.3 Q13.2 83.5 18.0 68.7 " fill="none" stroke="#888" stroke-width="0.6" opacity="0.6"/><path d="M41.9 0.0 L42.1 6.0 L42.6 12.0 L42.0 18.0 L42.0 24.0 L42.1 30.0 L41.6 36.0 L42.0 42.0 L42.2 48.0 L42.4 54.0 L41.4 60.0 L41.7 66.0 L41.4 72.0 L42.4 78.0 L42.3 84.0 L41.4 90.0 L42.7 96.0" fill="none" stroke="#aaa" stroke-width="0.8" opacity="0.5"/><ellipse cx="42" cy="35" rx="0.8" ry="1.2" fill="#888" opacity="0.6" filter="url(#blur1)"/><ellipse cx="43" cy="55" rx="0.8" ry="1.2" fill="#888" opacity="0.6" filter="url(#blur1)"/><ellipse cx="66" cy="62" rx="5" ry="12" fill="#999" opacity="0.75" filter="url(#blur2)"/><ellipse cx="66" cy="58" rx="2.5" ry="6" fill="#666" opacity="0.6" filter="url(#blur1)"/><ellipse cx="66" cy="92" rx="1.2" ry="2" fill="#888" opacity="0.6" filter="url(#blur1)"/><path d="M69.6 0.0 L70.3 6.0 L70.3 12.0 L70.6 18.0 L69.5 24.0 L69.6 30.0 L69.4 36.0" fill="none" stroke="#aaa" stroke-width="0.8" opacity="0.35"/><rect width="77" height="96" filter="url(#grain)" opacity="0.18"/><rect width="77" height="96" filter="url(#grainL)" opacity="0.2"/></svg></div><div class="lb" style="left:851.50px;top:253px">Dub Nuturaln Lak_r.jpg</div><svg class="bd" style="left:1010px;top:133px" width="12" height="7" viewBox="0 0 12 7"><rect width="12" height="7" fill="#6c6c1c"/><g fill="#d8d8c0" opacity=".8"><rect x="3" y="1" width="1" height="5"/><rect x="2" y="5" width="1" height="1" opacity=".6"/><rect x="4.5" y="1" width="1" height="5"/><rect x="5.5" y="1" width="1" height="1"/><rect x="5.5" y="3" width="1" height="1"/><rect x="6.3" y="1.7" width=".8" height="1.6"/><rect x="8" y="1" width="2" height="1"/><rect x="7.3" y="1.7" width="1" height="3.6"/><rect x="8" y="5" width="2" height="1"/><rect x="9.3" y="3" width=".9" height="2.3"/></g></svg><div class="th" style="left:35px;top:275px"><svg width="77" height="96" viewBox="0 0 77 96"><defs><linearGradient id="lg14" x1="0" x2="1" y1="0" y2="0"><stop offset="0" stop-color="#9a8a6e"/><stop offset="0.2" stop-color="#94846a"/><stop offset="0.35" stop-color="#988870"/><stop offset="0.38" stop-color="#72644c"/><stop offset="0.5" stop-color="#74654d"/><stop offset="0.58" stop-color="#807058"/><stop offset="0.8" stop-color="#847460"/><stop offset="1" stop-color="#86765e"/></linearGradient></defs><rect width="77" height="96" fill="url(#lg14)"/><path d="M11.5 0.0 L12.3 6.0 L12.2 12.0 L12.0 18.0 L11.5 24.0 L12.5 30.0 L12.5 36.0 L12.0 42.0 L12.0 48.0 L11.6 54.0 L11.2 60.0 L11.8 66.0 L12.1 72.0 L11.3 78.0 L12.5 84.0 L11.6 90.0 L11.6 96.0" fill="none" stroke="#5a4c38" stroke-width="0.8" opacity="0.35"/><path d="M25.7 0.0 L24.4 6.0 L24.2 12.0 L25.8 18.0 L24.5 24.0 L24.4 30.0 L25.2 36.0 L24.8 42.0 L25.6 48.0 L24.6 54.0 L25.7 60.0 L24.7 66.0 L25.2 72.0 L25.7 78.0 L25.3 84.0 L25.7 90.0 L25.3 96.0" fill="none" stroke="#5a4c38" stroke-width="0.8" opacity="0.3"/><path d="M55.7 0.0 L55.7 6.0 L55.6 12.0 L54.3 18.0 L55.1 24.0 L54.9 30.0 L55.0 36.0 L54.4 42.0 L54.5 48.0 L54.9 54.0 L54.6 60.0 L54.9 66.0 L54.2 72.0 L54.3 78.0 L55.3 84.0 L54.9 90.0 L55.0 96.0" fill="none" stroke="#5a4c38" stroke-width="0.8" opacity="0.35"/><ellipse cx="68" cy="25" rx="5" ry="10" fill="#a89878" opacity="0.3" filter="url(#blur2)"/><rect width="77" height="96" filter="url(#grain)" opacity="0.35"/><rect width="77" height="96" filter="url(#grainL)" opacity="0.25"/></svg></div><div class="lb" style="left:-27.00px;top:385px">El Gato page.jpg</div><svg class="bd" style="left:132px;top:265px" width="12" height="7" viewBox="0 0 12 7"><rect width="12" height="7" fill="#6c6c1c"/><g fill="#d8d8c0" opacity=".8"><rect x="3" y="1" width="1" height="5"/><rect x="2" y="5" width="1" height="1" opacity=".6"/><rect x="4.5" y="1" width="1" height="5"/><rect x="5.5" y="1" width="1" height="1"/><rect x="5.5" y="3" width="1" height="1"/><rect x="6.3" y="1.7" width=".8" height="1.6"/><rect x="8" y="1" width="2" height="1"/><rect x="7.3" y="1.7" width="1" height="3.6"/><rect x="8" y="5" width="2" height="1"/><rect x="9.3" y="3" width=".9" height="2.3"/></g></svg><div class="th" style="left:181px;top:275px"><svg width="77" height="96" viewBox="0 0 77 96"><defs><linearGradient id="lg15" x1="0" x2="1" y1="0" y2="0"><stop offset="0" stop-color="#d6d2d2"/><stop offset="0.35" stop-color="#d4d0d0"/><stop offset="0.38" stop-color="#bab6b6"/><stop offset="0.5" stop-color="#bcb8b8"/><stop offset="0.58" stop-color="#c4c0c0"/><stop offset="0.8" stop-color="#c6c2c2"/><stop offset="1" stop-color="#c8c4c4"/></linearGradient></defs><rect width="77" height="96" fill="url(#lg15)"/><path d="M11.5 0.0 L12.3 6.0 L12.2 12.0 L12.0 18.0 L11.5 24.0 L12.5 30.0 L12.5 36.0 L12.0 42.0 L12.0 48.0 L11.6 54.0 L11.2 60.0 L11.8 66.0 L12.1 72.0 L11.3 78.0 L12.5 84.0 L11.6 90.0 L11.6 96.0" fill="none" stroke="#999" stroke-width="0.8" opacity="0.3"/><path d="M25.7 0.0 L24.4 6.0 L24.2 12.0 L25.8 18.0 L24.5 24.0 L24.4 30.0 L25.2 36.0 L24.8 42.0 L25.6 48.0 L24.6 54.0 L25.7 60.0 L24.7 66.0 L25.2 72.0 L25.7 78.0 L25.3 84.0 L25.7 90.0 L25.3 96.0" fill="none" stroke="#999" stroke-width="0.8" opacity="0.3"/><path d="M55.7 0.0 L55.7 6.0 L55.6 12.0 L54.3 18.0 L55.1 24.0 L54.9 30.0 L55.0 36.0 L54.4 42.0 L54.5 48.0 L54.9 54.0 L54.6 60.0 L54.9 66.0 L54.2 72.0 L54.3 78.0 L55.3 84.0 L54.9 90.0 L55.0 96.0" fill="none" stroke="#999" stroke-width="0.8" opacity="0.3"/><rect width="77" height="96" filter="url(#grain)" opacity="0.25"/><rect width="77" height="96" filter="url(#grainL)" opacity="0.3"/></svg></div><div class="lb" style="left:119.50px;top:385px">El Gato page_b.jpg</div><svg class="bd" style="left:278px;top:265px" width="12" height="7" viewBox="0 0 12 7"><rect width="12" height="7" fill="#6c6c1c"/><g fill="#d8d8c0" opacity=".8"><rect x="3" y="1" width="1" height="5"/><rect x="2" y="5" width="1" height="1" opacity=".6"/><rect x="4.5" y="1" width="1" height="5"/><rect x="5.5" y="1" width="1" height="1"/><rect x="5.5" y="3" width="1" height="1"/><rect x="6.3" y="1.7" width=".8" height="1.6"/><rect x="8" y="1" width="2" height="1"/><rect x="7.3" y="1.7" width="1" height="3.6"/><rect x="8" y="5" width="2" height="1"/><rect x="9.3" y="3" width=".9" height="2.3"/></g></svg><div class="th" style="left:328px;top:275px"><svg width="77" height="96" viewBox="0 0 77 96"><defs><linearGradient id="lg16" x1="0" x2="1" y1="0" y2="0"><stop offset="0" stop-color="#d4d0d0"/><stop offset="0.35" stop-color="#d2cece"/><stop offset="0.38" stop-color="#b8b4b4"/><stop offset="0.5" stop-color="#bab6b6"/><stop offset="0.58" stop-color="#c2bebe"/><stop offset="0.8" stop-color="#c4c0c0"/><stop offset="1" stop-color="#c6c2c2"/></linearGradient></defs><rect width="77" height="96" fill="url(#lg16)"/><path d="M11.5 0.0 L12.3 6.0 L12.2 12.0 L12.0 18.0 L11.5 24.0 L12.5 30.0 L12.5 36.0 L12.0 42.0 L12.0 48.0 L11.6 54.0 L11.2 60.0 L11.8 66.0 L12.1 72.0 L11.3 78.0 L12.5 84.0 L11.6 90.0 L11.6 96.0" fill="none" stroke="#999" stroke-width="0.8" opacity="0.3"/><path d="M25.7 0.0 L24.4 6.0 L24.2 12.0 L25.8 18.0 L24.5 24.0 L24.4 30.0 L25.2 36.0 L24.8 42.0 L25.6 48.0 L24.6 54.0 L25.7 60.0 L24.7 66.0 L25.2 72.0 L25.7 78.0 L25.3 84.0 L25.7 90.0 L25.3 96.0" fill="none" stroke="#999" stroke-width="0.8" opacity="0.3"/><path d="M55.7 0.0 L55.7 6.0 L55.6 12.0 L54.3 18.0 L55.1 24.0 L54.9 30.0 L55.0 36.0 L54.4 42.0 L54.5 48.0 L54.9 54.0 L54.6 60.0 L54.9 66.0 L54.2 72.0 L54.3 78.0 L55.3 84.0 L54.9 90.0 L55.0 96.0" fill="none" stroke="#999" stroke-width="0.8" opacity="0.3"/><rect width="77" height="96" filter="url(#grain)" opacity="0.25"/><rect width="77" height="96" filter="url(#grainL)" opacity="0.3"/></svg></div><div class="lb" style="left:266.00px;top:385px">El Gato page_r.jpg</div><svg class="bd" style="left:425px;top:265px" width="12" height="7" viewBox="0 0 12 7"><rect width="12" height="7" fill="#6c6c1c"/><g fill="#d8d8c0" opacity=".8"><rect x="3" y="1" width="1" height="5"/><rect x="2" y="5" width="1" height="1" opacity=".6"/><rect x="4.5" y="1" width="1" height="5"/><rect x="5.5" y="1" width="1" height="1"/><rect x="5.5" y="3" width="1" height="1"/><rect x="6.3" y="1.7" width=".8" height="1.6"/><rect x="8" y="1" width="2" height="1"/><rect x="7.3" y="1.7" width="1" height="3.6"/><rect x="8" y="5" width="2" height="1"/><rect x="9.3" y="3" width=".9" height="2.3"/></g></svg><div class="th" style="left:474px;top:275px"><svg width="77" height="96" viewBox="0 0 77 96"><defs><linearGradient id="lg17" x1="0" x2="1" y1="0" y2="0"><stop offset="0" stop-color="#6c665a"/><stop offset="0.1" stop-color="#746e62"/><stop offset="0.4" stop-color="#787064"/><stop offset="0.62" stop-color="#6c665a"/><stop offset="0.7" stop-color="#5c574c"/><stop offset="0.78" stop-color="#6e685c"/><stop offset="1" stop-color="#726c60"/></linearGradient></defs><rect width="77" height="96" fill="url(#lg17)"/><path d="M4.5 0.0 L4.6 6.0 L4.9 12.0 L5.2 18.0 L4.6 24.0 L4.6 30.0 L4.7 36.0 L5.3 42.0 L4.6 48.0 L5.2 54.0 L5.2 60.0 L4.6 66.0 L5.0 72.0 L4.9 78.0 L4.9 84.0 L5.5 90.0 L4.6 96.0" fill="none" stroke="#2e2a22" stroke-width="0.9" opacity="0.55"/><ellipse cx="31" cy="13" rx="1" ry="1.5" fill="#2a2620" opacity="0.8" filter="url(#blur1)"/><ellipse cx="31" cy="76" rx="1" ry="1.5" fill="#2a2620" opacity="0.8" filter="url(#blur1)"/><path d="M54 0 L50 96 L44 96 L49 0Z" fill="#4e4a40" opacity=".35" filter="url(#blur1)"/><rect width="77" height="96" filter="url(#grain)" opacity="0.25"/><rect width="77" height="96" filter="url(#grainL)" opacity="0.12"/></svg></div><div class="lb" style="left:412.50px;top:385px">Grigio.jpg</div><svg class="bd" style="left:571px;top:265px" width="12" height="7" viewBox="0 0 12 7"><rect width="12" height="7" fill="#6c6c1c"/><g fill="#d8d8c0" opacity=".8"><rect x="3" y="1" width="1" height="5"/><rect x="2" y="5" width="1" height="1" opacity=".6"/><rect x="4.5" y="1" width="1" height="5"/><rect x="5.5" y="1" width="1" height="1"/><rect x="5.5" y="3" width="1" height="1"/><rect x="6.3" y="1.7" width=".8" height="1.6"/><rect x="8" y="1" width="2" height="1"/><rect x="7.3" y="1.7" width="1" height="3.6"/><rect x="8" y="5" width="2" height="1"/><rect x="9.3" y="3" width=".9" height="2.3"/></g></svg><div class="th" style="left:621px;top:275px"><svg width="77" height="96" viewBox="0 0 77 96"><defs><linearGradient id="lg18" x1="0" x2="1" y1="0" y2="0"><stop offset="0" stop-color="#9a9a9a"/><stop offset="0.1" stop-color="#a2a2a2"/><stop offset="0.4" stop-color="#aaaaaa"/><stop offset="0.62" stop-color="#9c9c9c"/><stop offset="0.7" stop-color="#8a8a8a"/><stop offset="0.78" stop-color="#9e9e9e"/><stop offset="1" stop-color="#a2a2a2"/></linearGradient></defs><rect width="77" height="96" fill="url(#lg18)"/><path d="M4.5 0.0 L4.6 6.0 L4.9 12.0 L5.2 18.0 L4.6 24.0 L4.6 30.0 L4.7 36.0 L5.3 42.0 L4.6 48.0 L5.2 54.0 L5.2 60.0 L4.6 66.0 L5.0 72.0 L4.9 78.0 L4.9 84.0 L5.5 90.0 L4.6 96.0" fill="none" stroke="#444" stroke-width="0.9" opacity="0.6"/><ellipse cx="31" cy="13" rx="1" ry="1.5" fill="#333" opacity="0.8" filter="url(#blur1)"/><ellipse cx="31" cy="76" rx="1" ry="1.5" fill="#333" opacity="0.8" filter="url(#blur1)"/><path d="M56 0 L52 96 L45 96 L50 0Z" fill="#6e6e6e" opacity=".45" filter="url(#blur1)"/><ellipse cx="36" cy="68" rx="2" ry="6" fill="#d8d8d8" opacity="0.5" filter="url(#blur2)"/><rect x="58" y="0" width="8" height="96" fill="#c8c8c8" opacity="0.3" filter="url(#blur1)"/><rect width="77" height="96" filter="url(#grain)" opacity="0.15"/><rect width="77" height="96" filter="url(#grainL)" opacity="0.2"/></svg></div><div class="lb" style="left:559.00px;top:385px">Grigio_b.jpg</div><svg class="bd" style="left:718px;top:265px" width="12" height="7" viewBox="0 0 12 7"><rect width="12" height="7" fill="#6c6c1c"/><g fill="#d8d8c0" opacity=".8"><rect x="3" y="1" width="1" height="5"/><rect x="2" y="5" width="1" height="1" opacity=".6"/><rect x="4.5" y="1" width="1" height="5"/><rect x="5.5" y="1" width="1" height="1"/><rect x="5.5" y="3" width="1" height="1"/><rect x="6.3" y="1.7" width=".8" height="1.6"/><rect x="8" y="1" width="2" height="1"/><rect x="7.3" y="1.7" width="1" height="3.6"/><rect x="8" y="5" width="2" height="1"/><rect x="9.3" y="3" width=".9" height="2.3"/></g></svg><div class="th" style="left:767px;top:275px"><svg width="77" height="96" viewBox="0 0 77 96"><defs><linearGradient id="lg19" x1="0" x2="1" y1="0" y2="0"><stop offset="0" stop-color="#969696"/><stop offset="0.1" stop-color="#9e9e9e"/><stop offset="0.4" stop-color="#a6a6a6"/><stop offset="0.62" stop-color="#989898"/><stop offset="0.7" stop-color="#868686"/><stop offset="0.78" stop-color="#9a9a9a"/><stop offset="1" stop-color="#9e9e9e"/></linearGradient></defs><rect width="77" height="96" fill="url(#lg19)"/><path d="M4.5 0.0 L4.6 6.0 L4.9 12.0 L5.2 18.0 L4.6 24.0 L4.6 30.0 L4.7 36.0 L5.3 42.0 L4.6 48.0 L5.2 54.0 L5.2 60.0 L4.6 66.0 L5.0 72.0 L4.9 78.0 L4.9 84.0 L5.5 90.0 L4.6 96.0" fill="none" stroke="#444" stroke-width="0.9" opacity="0.6"/><ellipse cx="31" cy="13" rx="1" ry="1.5" fill="#333" opacity="0.8" filter="url(#blur1)"/><ellipse cx="31" cy="76" rx="1" ry="1.5" fill="#333" opacity="0.8" filter="url(#blur1)"/><path d="M56 0 L52 96 L45 96 L50 0Z" fill="#6e6e6e" opacity=".45" filter="url(#blur1)"/><ellipse cx="36" cy="68" rx="2" ry="6" fill="#d8d8d8" opacity="0.5" filter="url(#blur2)"/><rect x="58" y="0" width="8" height="96" fill="#c8c8c8" opacity="0.3" filter="url(#blur1)"/><rect width="77" height="96" filter="url(#grain)" opacity="0.15"/><rect width="77" height="96" filter="url(#grainL)" opacity="0.2"/></svg></div><div class="lb" style="left:705.50px;top:385px">Grigio_r.jpg</div><svg class="bd" style="left:864px;top:265px" width="12" height="7" viewBox="0 0 12 7"><rect width="12" height="7" fill="#6c6c1c"/><g fill="#d8d8c0" opacity=".8"><rect x="3" y="1" width="1" height="5"/><rect x="2" y="5" width="1" height="1" opacity=".6"/><rect x="4.5" y="1" width="1" height="5"/><rect x="5.5" y="1" width="1" height="1"/><rect x="5.5" y="3" width="1" height="1"/><rect x="6.3" y="1.7" width=".8" height="1.6"/><rect x="8" y="1" width="2" height="1"/><rect x="7.3" y="1.7" width="1" height="3.6"/><rect x="8" y="5" width="2" height="1"/><rect x="9.3" y="3" width=".9" height="2.3"/></g></svg><div class="th" style="left:913px;top:275px"><svg width="77" height="96" viewBox="0 0 77 96"><defs><linearGradient id="lg20" x1="0" x2="1" y1="0" y2="0"><stop offset="0" stop-color="#8c866c"/><stop offset="0.15" stop-color="#7c775e"/><stop offset="0.22" stop-color="#747056"/><stop offset="0.3" stop-color="#888268"/><stop offset="0.55" stop-color="#8c866c"/><stop offset="0.7" stop-color="#847e66"/><stop offset="0.85" stop-color="#a09a80"/><stop offset="1" stop-color="#8c866c"/></linearGradient></defs><rect width="77" height="96" fill="url(#lg20)"/><ellipse cx="16" cy="48" rx="3" ry="45" fill="#5e5a46" opacity="0.45" filter="url(#blur2)"/><path d="M43.3 11.2 Q46.1 2.9 48.8 11.2 M42.4 17.0 Q46.0 10.1 49.7 17.0 M42.9 24.3 Q45.5 15.3 48.0 24.3 M43.0 31.1 Q46.5 23.0 49.9 31.1 M42.5 37.5 Q46.5 29.9 50.5 37.5 M41.8 44.9 Q46.0 35.8 50.2 44.9 M41.0 50.8 Q45.4 43.9 49.8 50.8 M41.2 58.8 Q45.6 48.9 50.0 58.8 M41.7 67.2 Q45.8 57.2 49.8 67.2 M40.8 75.1 Q45.4 65.7 50.0 75.1 M41.7 82.1 Q45.7 73.8 49.7 82.1 M43.5 88.4 Q46.4 80.9 49.3 88.4 M42.8 95.2 Q45.8 86.9 48.8 95.2 M44.1 101.8 Q46.6 93.9 49.1 101.8 " fill="none" stroke="#6e6850" stroke-width="0.8" opacity="0.45" filter="url(#soft)"/><ellipse cx="70" cy="20" rx="3" ry="14" fill="#b4ac8c" opacity="0.4" filter="url(#blur2)"/><rect width="77" height="96" filter="url(#grain)" opacity="0.2"/><rect width="77" height="96" filter="url(#grainL)" opacity="0.2"/></svg></div><div class="lb" style="left:851.50px;top:385px">Klaud.jpg</div><svg class="bd" style="left:1010px;top:265px" width="12" height="7" viewBox="0 0 12 7"><rect width="12" height="7" fill="#6c6c1c"/><g fill="#d8d8c0" opacity=".8"><rect x="3" y="1" width="1" height="5"/><rect x="2" y="5" width="1" height="1" opacity=".6"/><rect x="4.5" y="1" width="1" height="5"/><rect x="5.5" y="1" width="1" height="1"/><rect x="5.5" y="3" width="1" height="1"/><rect x="6.3" y="1.7" width=".8" height="1.6"/><rect x="8" y="1" width="2" height="1"/><rect x="7.3" y="1.7" width="1" height="3.6"/><rect x="8" y="5" width="2" height="1"/><rect x="9.3" y="3" width=".9" height="2.3"/></g></svg><div class="th" style="left:35px;top:407px"><svg width="77" height="96" viewBox="0 0 77 96"><defs><linearGradient id="lg21" x1="0" x2="1" y1="0" y2="0"><stop offset="0" stop-color="#bcbcbc"/><stop offset="0.12" stop-color="#b4b4b4"/><stop offset="0.16" stop-color="#959595"/><stop offset="0.22" stop-color="#8e8e8e"/><stop offset="0.27" stop-color="#b8b8b8"/><stop offset="0.4" stop-color="#d4d4d4"/><stop offset="0.47" stop-color="#d6d6d6"/><stop offset="0.52" stop-color="#b0b0b0"/><stop offset="0.75" stop-color="#ababab"/><stop offset="0.8" stop-color="#d6d6d6"/><stop offset="0.9" stop-color="#d8d8d8"/><stop offset="1" stop-color="#bcbcbc"/></linearGradient></defs><rect width="77" height="96" fill="url(#lg21)"/><ellipse cx="14" cy="30" rx="3" ry="14" fill="#7a7a7a" opacity="0.5" filter="url(#blur2)"/><ellipse cx="14" cy="70" rx="3.5" ry="14" fill="#7a7a7a" opacity="0.5" filter="url(#blur2)"/><path d="M41.7 9.0 Q45.8 3.7 49.9 9.0 M42.8 14.1 Q46.5 7.9 50.2 14.1 M41.9 19.8 Q46.5 12.9 51.0 19.8 M42.5 24.3 Q46.4 19.1 50.4 24.3 M41.8 29.3 Q46.3 23.2 50.8 29.3 M42.7 34.4 Q46.4 28.3 50.2 34.4 M42.4 38.5 Q46.4 33.6 50.4 38.5 M42.5 42.6 Q45.8 37.7 49.0 42.6 M41.8 46.6 Q45.9 41.8 50.0 46.6 M42.8 51.4 Q46.0 45.6 49.2 51.4 M43.9 56.8 Q46.4 50.2 48.9 56.8 M42.7 62.7 Q46.0 55.6 49.3 62.7 M42.6 67.8 Q46.1 61.8 49.6 67.8 M42.2 72.8 Q46.1 66.9 50.0 72.8 M42.5 76.9 Q46.0 72.1 49.6 76.9 M43.6 81.9 Q46.3 75.8 48.9 81.9 M43.1 87.4 Q46.2 80.7 49.3 87.4 M42.6 91.9 Q45.5 86.7 48.4 91.9 M43.1 97.7 Q46.5 90.6 49.8 97.7 " fill="none" stroke="#8a8a8a" stroke-width="0.7" opacity="0.5" filter="url(#soft)"/><path d="M43.9 11.2 Q46.6 5.6 49.3 11.2 M44.3 16.7 Q45.9 10.0 47.5 16.7 M44.3 21.3 Q46.0 15.8 47.6 21.3 M43.1 26.0 Q45.7 20.4 48.3 26.0 M43.8 31.7 Q46.5 24.7 49.3 31.7 M44.2 36.5 Q45.7 30.8 47.2 36.5 M44.9 42.3 Q46.6 35.2 48.3 42.3 M44.2 46.8 Q46.0 41.5 47.9 46.8 M43.6 52.0 Q46.1 45.6 48.6 52.0 M43.1 57.5 Q45.6 50.9 48.2 57.5 M44.2 62.6 Q45.8 56.5 47.3 62.6 M43.6 67.1 Q46.1 61.8 48.5 67.1 M44.8 72.8 Q46.4 65.8 48.1 72.8 M43.5 77.3 Q45.8 72.0 48.1 77.3 M42.8 82.2 Q45.4 76.3 48.1 82.2 M44.7 86.4 Q46.4 81.5 48.0 86.4 M44.0 92.2 Q45.7 85.1 47.5 92.2 M44.0 96.7 Q45.6 91.6 47.3 96.7 " fill="none" stroke="#e0e0e0" stroke-width="0.6" opacity="0.35" filter="url(#soft)"/><rect width="77" height="96" filter="url(#grain)" opacity="0.15"/><rect width="77" height="96" filter="url(#grainL)" opacity="0.15"/></svg></div><div class="lb" style="left:-27.00px;top:517px">Klaud_b.jpg</div><svg class="bd" style="left:132px;top:397px" width="12" height="7" viewBox="0 0 12 7"><rect width="12" height="7" fill="#6c6c1c"/><g fill="#d8d8c0" opacity=".8"><rect x="3" y="1" width="1" height="5"/><rect x="2" y="5" width="1" height="1" opacity=".6"/><rect x="4.5" y="1" width="1" height="5"/><rect x="5.5" y="1" width="1" height="1"/><rect x="5.5" y="3" width="1" height="1"/><rect x="6.3" y="1.7" width=".8" height="1.6"/><rect x="8" y="1" width="2" height="1"/><rect x="7.3" y="1.7" width="1" height="3.6"/><rect x="8" y="5" width="2" height="1"/><rect x="9.3" y="3" width=".9" height="2.3"/></g></svg><div class="th" style="left:181px;top:407px"><svg width="77" height="96" viewBox="0 0 77 96"><defs><linearGradient id="lg22" x1="0" x2="1" y1="0" y2="0"><stop offset="0" stop-color="#c0c0c0"/><stop offset="0.12" stop-color="#b8b8b8"/><stop offset="0.16" stop-color="#9a9a9a"/><stop offset="0.22" stop-color="#939393"/><stop offset="0.27" stop-color="#bcbcbc"/><stop offset="0.4" stop-color="#d8d8d8"/><stop offset="0.47" stop-color="#dadada"/><stop offset="0.52" stop-color="#b4b4b4"/><stop offset="0.75" stop-color="#b0b0b0"/><stop offset="0.8" stop-color="#dadada"/><stop offset="0.9" stop-color="#dcdcdc"/><stop offset="1" stop-color="#c0c0c0"/></linearGradient></defs><rect width="77" height="96" fill="url(#lg22)"/><ellipse cx="14" cy="30" rx="3" ry="14" fill="#7a7a7a" opacity="0.5" filter="url(#blur2)"/><ellipse cx="14" cy="70" rx="3.5" ry="14" fill="#7a7a7a" opacity="0.5" filter="url(#blur2)"/><path d="M41.7 9.0 Q45.8 3.7 49.9 9.0 M42.8 14.1 Q46.5 7.9 50.2 14.1 M41.9 19.8 Q46.5 12.9 51.0 19.8 M42.5 24.3 Q46.4 19.1 50.4 24.3 M41.8 29.3 Q46.3 23.2 50.8 29.3 M42.7 34.4 Q46.4 28.3 50.2 34.4 M42.4 38.5 Q46.4 33.6 50.4 38.5 M42.5 42.6 Q45.8 37.7 49.0 42.6 M41.8 46.6 Q45.9 41.8 50.0 46.6 M42.8 51.4 Q46.0 45.6 49.2 51.4 M43.9 56.8 Q46.4 50.2 48.9 56.8 M42.7 62.7 Q46.0 55.6 49.3 62.7 M42.6 67.8 Q46.1 61.8 49.6 67.8 M42.2 72.8 Q46.1 66.9 50.0 72.8 M42.5 76.9 Q46.0 72.1 49.6 76.9 M43.6 81.9 Q46.3 75.8 48.9 81.9 M43.1 87.4 Q46.2 80.7 49.3 87.4 M42.6 91.9 Q45.5 86.7 48.4 91.9 M43.1 97.7 Q46.5 90.6 49.8 97.7 " fill="none" stroke="#8a8a8a" stroke-width="0.7" opacity="0.5" filter="url(#soft)"/><path d="M43.9 11.2 Q46.6 5.6 49.3 11.2 M44.3 16.7 Q45.9 10.0 47.5 16.7 M44.3 21.3 Q46.0 15.8 47.6 21.3 M43.1 26.0 Q45.7 20.4 48.3 26.0 M43.8 31.7 Q46.5 24.7 49.3 31.7 M44.2 36.5 Q45.7 30.8 47.2 36.5 M44.9 42.3 Q46.6 35.2 48.3 42.3 M44.2 46.8 Q46.0 41.5 47.9 46.8 M43.6 52.0 Q46.1 45.6 48.6 52.0 M43.1 57.5 Q45.6 50.9 48.2 57.5 M44.2 62.6 Q45.8 56.5 47.3 62.6 M43.6 67.1 Q46.1 61.8 48.5 67.1 M44.8 72.8 Q46.4 65.8 48.1 72.8 M43.5 77.3 Q45.8 72.0 48.1 77.3 M42.8 82.2 Q45.4 76.3 48.1 82.2 M44.7 86.4 Q46.4 81.5 48.0 86.4 M44.0 92.2 Q45.7 85.1 47.5 92.2 M44.0 96.7 Q45.6 91.6 47.3 96.7 " fill="none" stroke="#e0e0e0" stroke-width="0.6" opacity="0.35" filter="url(#soft)"/><rect width="77" height="96" filter="url(#grain)" opacity="0.15"/><rect width="77" height="96" filter="url(#grainL)" opacity="0.15"/></svg></div><div class="lb" style="left:119.50px;top:517px">Klaud_r.jpg</div><svg class="bd" style="left:278px;top:397px" width="12" height="7" viewBox="0 0 12 7"><rect width="12" height="7" fill="#6c6c1c"/><g fill="#d8d8c0" opacity=".8"><rect x="3" y="1" width="1" height="5"/><rect x="2" y="5" width="1" height="1" opacity=".6"/><rect x="4.5" y="1" width="1" height="5"/><rect x="5.5" y="1" width="1" height="1"/><rect x="5.5" y="3" width="1" height="1"/><rect x="6.3" y="1.7" width=".8" height="1.6"/><rect x="8" y="1" width="2" height="1"/><rect x="7.3" y="1.7" width="1" height="3.6"/><rect x="8" y="5" width="2" height="1"/><rect x="9.3" y="3" width=".9" height="2.3"/></g></svg><div class="th" style="left:328px;top:407px"><svg width="77" height="96" viewBox="0 0 77 96"><defs><linearGradient id="lg23" x1="0" x2="1" y1="0" y2="0"><stop offset="0" stop-color="#4e4432"/><stop offset="0.25" stop-color="#544836"/><stop offset="0.5" stop-color="#5c5038"/><stop offset="0.6" stop-color="#60543a"/><stop offset="0.75" stop-color="#5a4e36"/><stop offset="0.88" stop-color="#6a5c40"/><stop offset="1" stop-color="#5e5238"/></linearGradient></defs><rect width="77" height="96" fill="url(#lg23)"/><ellipse cx="69" cy="9" rx="1.5" ry="2.5" fill="#2a2414" opacity="0.6" filter="url(#blur1)"/><ellipse cx="69" cy="55" rx="1.2" ry="2" fill="#2a2414" opacity="0.5" filter="url(#blur1)"/><path d="M50.9 30.0 L50.7 36.0 L50.6 42.0 L51.5 48.0 L51.1 54.0 L51.2 60.0 L51.1 66.0 L50.9 72.0 L51.3 78.0 L51.1 84.0 L51.3 90.0 L51.2 96.0" fill="none" stroke="#3a3220" stroke-width="0.8" opacity="0.4"/><ellipse cx="10" cy="90" rx="4" ry="4" fill="#3a3220" opacity="0.4" filter="url(#blur2)"/><rect width="77" height="96" filter="url(#grain)" opacity="0.2"/><rect width="77" height="96" filter="url(#grainL)" opacity="0.1"/></svg></div><div class="lb" style="left:266.00px;top:517px">Korsario.jpg</div><svg class="bd" style="left:425px;top:397px" width="12" height="7" viewBox="0 0 12 7"><rect width="12" height="7" fill="#6c6c1c"/><g fill="#d8d8c0" opacity=".8"><rect x="3" y="1" width="1" height="5"/><rect x="2" y="5" width="1" height="1" opacity=".6"/><rect x="4.5" y="1" width="1" height="5"/><rect x="5.5" y="1" width="1" height="1"/><rect x="5.5" y="3" width="1" height="1"/><rect x="6.3" y="1.7" width=".8" height="1.6"/><rect x="8" y="1" width="2" height="1"/><rect x="7.3" y="1.7" width="1" height="3.6"/><rect x="8" y="5" width="2" height="1"/><rect x="9.3" y="3" width=".9" height="2.3"/></g></svg><div class="th" style="left:474px;top:407px"><svg width="77" height="96" viewBox="0 0 77 96"><defs><linearGradient id="lg24" x1="0" x2="1" y1="0" y2="0"><stop offset="0" stop-color="#989898"/><stop offset="0.45" stop-color="#949494"/><stop offset="0.55" stop-color="#aaaaaa"/><stop offset="0.7" stop-color="#a4a4a4"/><stop offset="0.88" stop-color="#b4b4b4"/><stop offset="1" stop-color="#a2a2a2"/></linearGradient></defs><rect width="77" height="96" fill="url(#lg24)"/><ellipse cx="69" cy="9" rx="1.5" ry="2.5" fill="#555" opacity="0.6" filter="url(#blur1)"/><ellipse cx="69" cy="55" rx="1.2" ry="2" fill="#666" opacity="0.5" filter="url(#blur1)"/><path d="M50.9 30.0 L50.7 36.0 L50.6 42.0 L51.5 48.0 L51.1 54.0 L51.2 60.0 L51.1 66.0 L50.9 72.0 L51.3 78.0 L51.1 84.0 L51.3 90.0 L51.2 96.0" fill="none" stroke="#777" stroke-width="0.8" opacity="0.45"/><ellipse cx="50" cy="80" rx="1.2" ry="2.5" fill="#666" opacity="0.5" filter="url(#blur1)"/><rect width="77" height="96" filter="url(#grain)" opacity="0.35"/><rect width="77" height="96" filter="url(#grainL)" opacity="0.3"/></svg></div><div class="lb" style="left:412.50px;top:517px">Korsario_b.jpg</div><svg class="bd" style="left:571px;top:397px" width="12" height="7" viewBox="0 0 12 7"><rect width="12" height="7" fill="#6c6c1c"/><g fill="#d8d8c0" opacity=".8"><rect x="3" y="1" width="1" height="5"/><rect x="2" y="5" width="1" height="1" opacity=".6"/><rect x="4.5" y="1" width="1" height="5"/><rect x="5.5" y="1" width="1" height="1"/><rect x="5.5" y="3" width="1" height="1"/><rect x="6.3" y="1.7" width=".8" height="1.6"/><rect x="8" y="1" width="2" height="1"/><rect x="7.3" y="1.7" width="1" height="3.6"/><rect x="8" y="5" width="2" height="1"/><rect x="9.3" y="3" width=".9" height="2.3"/></g></svg><div class="th" style="left:621px;top:407px"><svg width="77" height="96" viewBox="0 0 77 96"><defs><linearGradient id="lg25" x1="0" x2="1" y1="0" y2="0"><stop offset="0" stop-color="#b8b8b8"/><stop offset="0.45" stop-color="#b4b4b4"/><stop offset="0.55" stop-color="#c8c8c8"/><stop offset="0.7" stop-color="#c2c2c2"/><stop offset="0.88" stop-color="#d0d0d0"/><stop offset="1" stop-color="#c0c0c0"/></linearGradient></defs><rect width="77" height="96" fill="url(#lg25)"/><ellipse cx="69" cy="9" rx="1.5" ry="2.5" fill="#555" opacity="0.6" filter="url(#blur1)"/><ellipse cx="69" cy="55" rx="1.2" ry="2" fill="#666" opacity="0.5" filter="url(#blur1)"/><path d="M50.9 30.0 L50.7 36.0 L50.6 42.0 L51.5 48.0 L51.1 54.0 L51.2 60.0 L51.1 66.0 L50.9 72.0 L51.3 78.0 L51.1 84.0 L51.3 90.0 L51.2 96.0" fill="none" stroke="#777" stroke-width="0.8" opacity="0.45"/><ellipse cx="50" cy="80" rx="1.2" ry="2.5" fill="#666" opacity="0.5" filter="url(#blur1)"/><rect width="77" height="96" filter="url(#grain)" opacity="0.3"/><rect width="77" height="96" filter="url(#grainL)" opacity="0.25"/></svg></div><div class="lb" style="left:559.00px;top:517px">Korsario_r.jpg</div><svg class="bd" style="left:718px;top:397px" width="12" height="7" viewBox="0 0 12 7"><rect width="12" height="7" fill="#6c6c1c"/><g fill="#d8d8c0" opacity=".8"><rect x="3" y="1" width="1" height="5"/><rect x="2" y="5" width="1" height="1" opacity=".6"/><rect x="4.5" y="1" width="1" height="5"/><rect x="5.5" y="1" width="1" height="1"/><rect x="5.5" y="3" width="1" height="1"/><rect x="6.3" y="1.7" width=".8" height="1.6"/><rect x="8" y="1" width="2" height="1"/><rect x="7.3" y="1.7" width="1" height="3.6"/><rect x="8" y="5" width="2" height="1"/><rect x="9.3" y="3" width=".9" height="2.3"/></g></svg><div class="th" style="left:767px;top:407px"><svg width="77" height="96" viewBox="0 0 77 96"><defs><linearGradient id="lg26" x1="0" x2="1" y1="0" y2="0"><stop offset="0" stop-color="#282620"/><stop offset="0.45" stop-color="#24221c"/><stop offset="0.62" stop-color="#201e18"/><stop offset="0.75" stop-color="#2c2a24"/><stop offset="0.85" stop-color="#22201a"/><stop offset="1" stop-color="#2a2822"/></linearGradient></defs><rect width="77" height="96" fill="url(#lg26)"/><path d="M14.4 24.2 Q17.3 18.6 20.2 24.2 M14.3 28.7 Q17.3 23.4 20.2 28.7 M14.2 33.1 Q17.1 27.9 19.9 33.1 M14.5 37.7 Q16.7 32.1 18.9 37.7 M15.4 42.1 Q17.4 36.9 19.5 42.1 M13.8 47.1 Q17.1 41.0 20.5 47.1 M14.5 52.1 Q17.1 46.1 19.7 52.1 M14.4 58.0 Q16.5 50.9 18.5 58.0 M14.5 63.5 Q17.4 56.9 20.3 63.5 M14.6 68.9 Q16.6 62.5 18.7 68.9 M14.8 73.1 Q17.1 68.2 19.5 73.1 M14.5 77.7 Q16.4 72.2 18.3 77.7 M14.8 82.4 Q17.5 76.7 20.2 82.4 M14.3 86.8 Q17.3 81.5 20.4 86.8 M14.8 90.8 Q17.0 86.0 19.2 90.8 M14.7 95.3 Q16.8 89.8 18.9 95.3 M13.9 100.6 Q16.5 94.1 19.0 100.6 " fill="none" stroke="#5a5850" stroke-width="0.7" opacity="0.4" filter="url(#soft)"/><rect x="35" y="0" width="1" height="96" fill="#121210" opacity="0.6"/><ellipse cx="50" cy="14" rx="2.2" ry="6" fill="#121210" opacity="0.6" filter="url(#blur1)"/><ellipse cx="50" cy="72" rx="2.2" ry="8" fill="#121210" opacity="0.6" filter="url(#blur1)"/><rect x="46" y="0" width="1" height="96" fill="#3a3830" opacity="0.4"/><path d="M66.5 4.9 Q69.2 -1.6 71.9 4.9 M67.6 9.8 Q69.3 4.0 71.0 9.8 M66.9 14.6 Q68.9 8.8 70.9 14.6 M67.4 18.7 Q69.4 13.9 71.5 18.7 M67.3 23.5 Q69.3 17.7 71.3 23.5 M66.1 27.7 Q68.5 22.8 70.9 27.7 M67.4 32.0 Q69.5 26.8 71.6 32.0 M66.2 37.6 Q68.7 30.6 71.2 37.6 M67.6 43.2 Q69.5 36.5 71.4 43.2 M66.7 48.5 Q69.5 42.2 72.4 48.5 M67.2 53.0 Q68.8 47.7 70.3 53.0 M66.5 58.7 Q68.9 51.6 71.4 58.7 M67.5 64.0 Q69.5 57.7 71.5 64.0 M66.8 69.8 Q68.9 62.7 70.9 69.8 M66.3 75.5 Q69.0 68.7 71.6 75.5 M66.8 81.5 Q68.8 74.3 70.8 81.5 M67.3 86.7 Q69.2 80.5 71.1 86.7 M67.2 92.3 Q69.3 85.6 71.5 92.3 M67.1 97.7 Q68.8 91.2 70.6 97.7 " fill="none" stroke="#6a685e" stroke-width="0.8" opacity="0.45" filter="url(#soft)"/><rect width="77" height="96" filter="url(#grain)" opacity="0.2"/><rect width="77" height="96" filter="url(#grainL)" opacity="0.12"/></svg></div><div class="lb" style="left:705.50px;top:517px">Metalic black.jpg</div><svg class="bd" style="left:864px;top:397px" width="12" height="7" viewBox="0 0 12 7"><rect width="12" height="7" fill="#6c6c1c"/><g fill="#d8d8c0" opacity=".8"><rect x="3" y="1" width="1" height="5"/><rect x="2" y="5" width="1" height="1" opacity=".6"/><rect x="4.5" y="1" width="1" height="5"/><rect x="5.5" y="1" width="1" height="1"/><rect x="5.5" y="3" width="1" height="1"/><rect x="6.3" y="1.7" width=".8" height="1.6"/><rect x="8" y="1" width="2" height="1"/><rect x="7.3" y="1.7" width="1" height="3.6"/><rect x="8" y="5" width="2" height="1"/><rect x="9.3" y="3" width=".9" height="2.3"/></g></svg><div class="th" style="left:913px;top:407px"><svg width="77" height="96" viewBox="0 0 77 96"><defs><linearGradient id="lg27" x1="0" x2="1" y1="0" y2="0"><stop offset="0" stop-color="#6a6a6a"/><stop offset="0.3" stop-color="#646464"/><stop offset="0.45" stop-color="#5c5c5c"/><stop offset="0.5" stop-color="#6a6a6a"/><stop offset="0.65" stop-color="#505050"/><stop offset="0.72" stop-color="#626262"/><stop offset="0.85" stop-color="#6e6e6e"/><stop offset="0.9" stop-color="#5a5a5a"/><stop offset="1" stop-color="#6a6a6a"/></linearGradient></defs><rect width="77" height="96" fill="url(#lg27)"/><path d="M13.9 24.2 Q17.3 18.6 20.7 24.2 M13.8 28.7 Q17.3 23.4 20.7 28.7 M13.7 33.1 Q17.1 27.9 20.4 33.1 M14.1 37.7 Q16.7 32.1 19.3 37.7 M15.1 42.1 Q17.4 36.9 19.8 42.1 M13.2 47.1 Q17.1 41.0 21.1 47.1 M14.0 52.1 Q17.1 46.1 20.2 52.1 M14.1 58.0 Q16.5 50.9 18.9 58.0 M14.0 63.5 Q17.4 56.9 20.8 63.5 M14.2 68.9 Q16.6 62.5 19.0 68.9 M14.4 73.1 Q17.1 68.2 19.9 73.1 M14.2 77.7 Q16.4 72.2 18.6 77.7 M14.3 82.4 Q17.5 76.7 20.7 82.4 M13.8 86.8 Q17.3 81.5 20.9 86.8 M14.4 90.8 Q17.0 86.0 19.5 90.8 M14.4 95.3 Q16.8 89.8 19.3 95.3 M13.5 100.6 Q16.5 94.1 19.5 100.6 " fill="none" stroke="#b4b4b4" stroke-width="0.7" opacity="0.45" filter="url(#soft)"/><rect x="35" y="0" width="1" height="96" fill="#262626" opacity="0.7"/><ellipse cx="50" cy="12" rx="2.6" ry="7" fill="#1a1a1a" opacity="0.85" filter="url(#blur1)"/><ellipse cx="50" cy="74" rx="2.6" ry="9" fill="#1a1a1a" opacity="0.85" filter="url(#blur1)"/><ellipse cx="19" cy="9" rx="1.8" ry="3.5" fill="#222" opacity="0.7" filter="url(#blur1)"/><ellipse cx="19" cy="82" rx="1.8" ry="3.5" fill="#222" opacity="0.7" filter="url(#blur1)"/><rect x="58" y="0" width="1" height="96" fill="#a0a0a0" opacity="0.45"/><path d="M66.9 5.2 Q69.5 -1.7 72.0 5.2 M66.6 10.3 Q68.6 4.2 70.6 10.3 M67.1 15.6 Q69.3 9.2 71.5 15.6 M65.8 21.4 Q69.1 14.4 72.3 21.4 M66.4 26.9 Q68.6 20.3 70.7 26.9 M66.2 31.5 Q68.5 26.1 70.8 31.5 M67.1 35.7 Q69.3 30.7 71.5 35.7 M66.9 40.5 Q69.3 34.6 71.6 40.5 M66.8 45.5 Q68.7 39.5 70.7 45.5 M67.3 50.2 Q69.4 44.5 71.4 50.2 M66.5 54.7 Q69.1 49.3 71.7 54.7 M65.4 59.4 Q68.6 53.8 71.8 59.4 M66.6 64.4 Q68.7 58.3 70.9 64.4 M66.6 69.7 Q69.6 63.3 72.5 69.7 M66.8 74.2 Q68.9 68.9 71.0 74.2 M66.2 78.3 Q69.5 73.4 72.7 78.3 M66.5 83.6 Q69.0 77.1 71.5 83.6 M66.9 89.3 Q69.3 82.5 71.7 89.3 M67.5 95.2 Q69.3 88.0 71.2 95.2 M66.0 100.3 Q69.1 94.3 72.1 100.3 " fill="none" stroke="#1e1e1e" stroke-width="1.0" opacity="0.7" filter="url(#soft)"/><path d="M66.6 6.4 Q68.9 1.2 71.2 6.4 M67.4 11.3 Q69.1 5.3 70.9 11.3 M67.2 15.6 Q69.0 10.6 70.9 15.6 M66.7 20.6 Q69.5 14.5 72.2 20.6 M66.8 25.4 Q68.7 19.7 70.5 25.4 M67.0 30.7 Q68.8 24.3 70.5 30.7 M66.1 35.3 Q68.6 29.8 71.2 35.3 M66.5 39.6 Q68.5 34.5 70.5 39.6 M66.9 44.8 Q69.1 38.4 71.4 44.8 M67.1 49.6 Q68.8 44.0 70.5 49.6 M66.5 54.5 Q68.7 48.6 70.9 54.5 M66.7 59.6 Q68.7 53.5 70.6 59.6 M66.2 64.5 Q68.6 58.7 71.1 64.5 M66.8 68.6 Q68.6 63.8 70.5 68.6 M67.4 72.8 Q69.2 67.8 70.9 72.8 M67.5 76.8 Q69.4 72.0 71.3 76.8 M66.3 82.3 Q69.1 75.5 72.0 82.3 M67.3 87.5 Q69.3 81.3 71.2 87.5 M67.1 93.2 Q68.6 86.3 70.2 93.2 M67.2 97.4 Q69.2 92.6 71.1 97.4 " fill="none" stroke="#d8d8d8" stroke-width="0.8" opacity="0.55" filter="url(#soft)"/><rect x="18" y="0" width="4" height="96" fill="#3a3a3a" opacity="0.25" filter="url(#blur1)"/><rect width="77" height="96" filter="url(#grain)" opacity="0.45"/><rect width="77" height="96" filter="url(#grainL)" opacity="0.35"/></svg></div><div class="lb" style="left:851.50px;top:517px">Metalic black_b.jpg</div><svg class="bd" style="left:1010px;top:397px" width="12" height="7" viewBox="0 0 12 7"><rect width="12" height="7" fill="#6c6c1c"/><g fill="#d8d8c0" opacity=".8"><rect x="3" y="1" width="1" height="5"/><rect x="2" y="5" width="1" height="1" opacity=".6"/><rect x="4.5" y="1" width="1" height="5"/><rect x="5.5" y="1" width="1" height="1"/><rect x="5.5" y="3" width="1" height="1"/><rect x="6.3" y="1.7" width=".8" height="1.6"/><rect x="8" y="1" width="2" height="1"/><rect x="7.3" y="1.7" width="1" height="3.6"/><rect x="8" y="5" width="2" height="1"/><rect x="9.3" y="3" width=".9" height="2.3"/></g></svg><svg style="position:absolute;left:209px;top:0px" width="18" height="10" viewBox="0 0 18 10">
<rect x="1.5" y="1.5" width="5.5" height="6" fill="#464646" stroke="#c4c4c4" stroke-width="1"/>
<rect x="9" y="1" width="7" height="7" fill="#5a5a5a"/>
<path d="M9.6 7.6 L15.4 1.4" stroke="#dcdcdc" stroke-width="1.2"/>
</svg>
<svg style="position:absolute;left:284px;top:112px" width="7" height="7" viewBox="0 0 7 7">
<rect x="0" y="0" width="7" height="7" fill="#6e6e6e"/>
<path d="M1.2 3.6 L2.8 5.2 L5.9 1.6" stroke="#eee" stroke-width="1.2" fill="none"/>
</svg>
</body></html>
